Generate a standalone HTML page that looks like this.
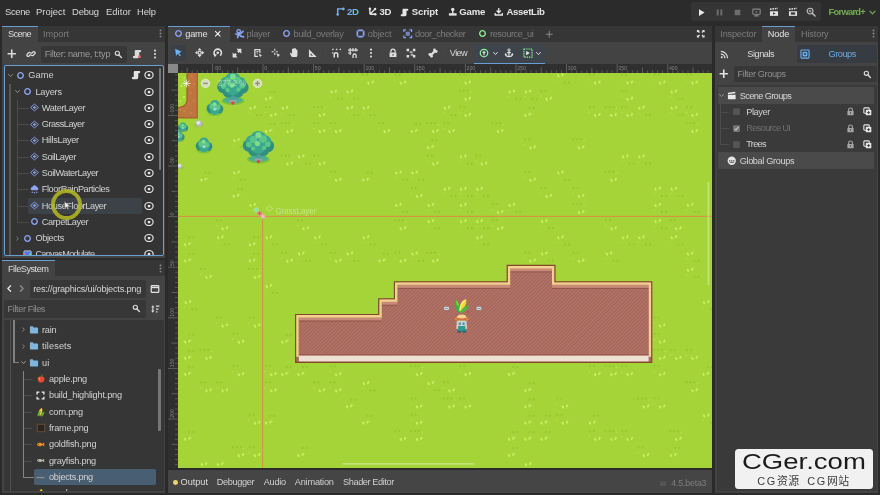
<!DOCTYPE html>
<html>
<head>
<meta charset="utf-8">
<title>Godot Editor</title>
<style>
html,body{margin:0;padding:0;background:#272727;}
body{width:880px;height:495px;overflow:hidden;position:relative;font-family:"Liberation Sans","DejaVu Sans",sans-serif;font-size:9px;color:#d4d4d4;}
#app{will-change:transform;position:absolute;left:0;top:0;width:880px;height:495px;background:#2a2a2a;overflow:hidden;}
.abs{position:absolute;}
.t{position:absolute;white-space:nowrap;line-height:12px;height:12px;font-size:9.2px;color:#d4d4d4;}
svg{position:absolute;overflow:visible;color:#dcdcdc;}
</style>
</head>
<body>
<div id="app">
<!-- menu bar -->
<div class="abs" style="left:0px;top:0px;width:880px;height:25px;background:#2b2b2b;"></div>
<span class="t" style="left:5px;top:6px;font-size:9.4px;color:#d8d8d8;letter-spacing:-0.330px;">Scene</span>
<span class="t" style="left:36px;top:6px;font-size:9.4px;color:#d8d8d8;letter-spacing:0.035px;">Project</span>
<span class="t" style="left:72px;top:6px;font-size:9.4px;color:#d8d8d8;letter-spacing:-0.140px;">Debug</span>
<span class="t" style="left:106px;top:6px;font-size:9.4px;color:#d8d8d8;letter-spacing:0.074px;">Editor</span>
<span class="t" style="left:137px;top:6px;font-size:9.4px;color:#d8d8d8;letter-spacing:-0.083px;">Help</span>
<svg style="left:335.5px;top:7.300000000000001px;color:#74b3f0;" width="9" height="9" viewBox="0 0 16 16"><path d="M3 13.2 V3.4 H13.4" fill="none" stroke="currentColor" stroke-width="2.5"/><circle cx="3" cy="13.2" r="2.3" fill="currentColor"/><circle cx="13.2" cy="3.4" r="2.3" fill="currentColor"/></svg>
<span class="t" style="left:347px;top:6px;font-size:9.6px;color:#74b3f0;font-weight:bold;letter-spacing:-0.386px;">2D</span>
<svg style="left:368.0px;top:7.1px;color:#e6e6e6;" width="9" height="9" viewBox="0 0 16 16"><path d="M3.4 12.8 V3.4 M3.4 12.8 H13 M3.4 12.8 L12.4 3.8" fill="none" stroke="currentColor" stroke-width="2.4"/><circle cx="3.4" cy="3.2" r="2.2" fill="currentColor"/><circle cx="13" cy="12.8" r="2.2" fill="currentColor"/><circle cx="12.6" cy="3.6" r="2.2" fill="currentColor"/></svg>
<span class="t" style="left:379.5px;top:6px;font-size:9.6px;color:#e6e6e6;font-weight:bold;letter-spacing:-0.386px;">3D</span>
<svg style="left:400.0px;top:7.5px;color:#e6e6e6;" width="9" height="9" viewBox="0 0 16 16"><path d="M6 1.5 H13 a1.8 1.8 0 0 1 0 3.6 H11.6 V12 a2.6 2.6 0 0 1 -2.6 2.6 H3 a1.8 1.8 0 0 1 0 -3.6 H4.4 V3.1 A1.6 1.6 0 0 1 6 1.5 Z" fill="currentColor"/></svg>
<span class="t" style="left:411.8px;top:6px;font-size:9.6px;color:#e6e6e6;font-weight:bold;letter-spacing:-0.168px;">Script</span>
<svg style="left:447.75px;top:7.25px;color:#e6e6e6;" width="9.5" height="9.5" viewBox="0 0 16 16"><circle cx="8" cy="4" r="2.8" fill="currentColor"/><path d="M6.8 6 H9.2 V11 H6.8 Z" fill="currentColor"/><path d="M1.5 10.5 H14.5 V14.5 H1.5 Z" fill="currentColor"/></svg>
<span class="t" style="left:459.3px;top:6px;font-size:9.6px;color:#e6e6e6;font-weight:bold;letter-spacing:-0.220px;">Game</span>
<svg style="left:494.25px;top:7.25px;color:#e6e6e6;" width="9.5" height="9.5" viewBox="0 0 16 16"><path d="M8 1.5 V9 M4.5 6 L8 9.6 L11.5 6" fill="none" stroke="currentColor" stroke-width="2.2"/><path d="M2 10 V13.5 H14 V10" fill="none" stroke="currentColor" stroke-width="2.2"/></svg>
<span class="t" style="left:506.4px;top:6px;font-size:9.6px;color:#e6e6e6;font-weight:bold;letter-spacing:-0.292px;">AssetLib</span>
<div class="abs" style="left:690.8px;top:2.4px;width:130.4px;height:18.8px;background:#353535;border-radius:3px;"></div>
<svg style="left:696.5px;top:7.5px;color:#e8e8e8;" width="9" height="9" viewBox="0 0 16 16"><path d="M3.5 2 L13.5 8 L3.5 14 Z" fill="currentColor"/></svg>
<svg style="left:714.5px;top:7.5px;color:#6d6d6d;" width="9" height="9" viewBox="0 0 16 16"><path d="M3 2.5 H6.5 V13.5 H3 Z M9.5 2.5 H13 V13.5 H9.5 Z" fill="currentColor"/></svg>
<svg style="left:733.0px;top:7.5px;color:#6d6d6d;" width="9" height="9" viewBox="0 0 16 16"><rect x="3" y="3" width="10" height="10" rx="1" fill="currentColor"/></svg>
<svg style="left:751.5px;top:7.5px;color:#858585;" width="9" height="9" viewBox="0 0 16 16"><rect x="1.5" y="2" width="13" height="9" rx="1" fill="none" stroke="currentColor" stroke-width="2"/><path d="M6.5 5 L10 6.8 L6.5 8.6 Z" fill="currentColor"/><path d="M4 14 H12 M8 11 V14" stroke="currentColor" stroke-width="2"/></svg>
<svg style="left:769.0px;top:7.0px;color:#e2e2e2;" width="10" height="10" viewBox="0 0 16 16"><path d="M1.5 6.8 H14.5 V14.2 H1.5 Z" fill="currentColor"/><path d="M1.5 3.6 L14.2 2.2" stroke="currentColor" stroke-width="2.6" stroke-dasharray="2.6 1.4"/><path d="M6.5 8.4 L10.5 10.4 L6.5 12.4 Z" fill="#353535"/></svg>
<svg style="left:787.5px;top:7.0px;color:#e2e2e2;" width="10" height="10" viewBox="0 0 16 16"><path d="M1.5 6.8 H14.5 V14.2 H1.5 Z" fill="currentColor"/><path d="M1.5 3.6 L14.2 2.2" stroke="currentColor" stroke-width="2.6" stroke-dasharray="2.6 1.4"/><rect x="4.5" y="8.6" width="7" height="3.6" fill="#353535"/></svg>
<svg style="left:806.0px;top:7.0px;color:#bdbdbd;" width="10" height="10" viewBox="0 0 16 16"><circle cx="6.5" cy="6.5" r="4.6" fill="none" stroke="currentColor" stroke-width="1.8"/><path d="M10 10 L14.5 14.5" stroke="currentColor" stroke-width="2.4" stroke-linecap="round"/><path d="M4.5 6.5 H8.5 M6.5 4.5 V8.5" stroke="currentColor" stroke-width="1.4"/></svg>
<span class="t" style="left:828.6px;top:6px;font-size:9.4px;color:#73aa53;font-weight:bold;letter-spacing:-0.746px;">Forward+</span>
<svg style="left:867.9px;top:7.699999999999999px;color:#73aa53;" width="9" height="9" viewBox="0 0 16 16"><path d="M3.5 5.5 L8 10.5 L12.5 5.5" fill="none" stroke="currentColor" stroke-width="2.2" stroke-linecap="round" stroke-linejoin="round"/></svg>
<!-- scene dock -->
<div class="abs" style="left:2px;top:26px;width:163px;height:16px;background:#363636;"></div>
<div class="abs" style="left:2px;top:26px;width:36px;height:16px;background:#434343;border-top:1px solid #6a9fd3;box-sizing:border-box;"></div>
<span class="t" style="left:8px;top:27.799999999999997px;font-size:9.2px;color:#dedede;letter-spacing:-0.617px;">Scene</span>
<span class="t" style="left:43px;top:27.799999999999997px;font-size:9.2px;color:#7c7c7c;letter-spacing:-0.012px;">Import</span>
<svg style="left:155.5px;top:29.299999999999997px;color:#8a8a8a;" width="9" height="9" viewBox="0 0 16 16"><circle cx="8" cy="2.5" r="1.7" fill="currentColor"/><circle cx="8" cy="8" r="1.7" fill="currentColor"/><circle cx="8" cy="13.5" r="1.7" fill="currentColor"/></svg>
<div class="abs" style="left:2px;top:42px;width:163px;height:216px;background:#434343;"></div>
<svg style="left:7.25px;top:49.25px;color:#dadada;" width="9.5" height="9.5" viewBox="0 0 16 16"><path d="M8 1 V15 M1 8 H15" stroke="currentColor" stroke-width="2.7" fill="none"/></svg>
<svg style="left:25.5px;top:49.0px;color:#dadada;" width="10" height="10" viewBox="0 0 16 16"><g fill="none" stroke="currentColor" stroke-width="2.2" stroke-linecap="round"><path d="M6.8 9.2 L4.9 11.1 a2 2 0 0 1 -2.9 -2.9 L4.2 6 a2 2 0 0 1 3 0"/><path d="M9.2 6.8 L11.1 4.9 a2 2 0 0 1 2.9 2.9 L11.8 10 a2 2 0 0 1 -3 0"/></g></svg>
<div class="abs" style="left:41px;top:45.5px;width:85.5px;height:17px;background:#373737;border-radius:2px;"></div>
<span class="t" style="left:44.8px;top:48px;font-size:9.2px;color:#9b9b9b;letter-spacing:-0.293px;">Filter: name, t:typ</span>
<svg style="left:114.25px;top:49.75px;color:#dadada;" width="8.5" height="8.5" viewBox="0 0 16 16"><circle cx="6.3" cy="6.3" r="3.9" fill="none" stroke="currentColor" stroke-width="2.2"/><path d="M9.3 9.3 L14 14" stroke="currentColor" stroke-width="2.6" stroke-linecap="round"/></svg>
<svg style="left:131.5px;top:49.0px;color:#dadada;" width="10" height="10" viewBox="0 0 16 16"><path d="M6 1.5 H13 a1.8 1.8 0 0 1 0 3.6 H11.6 V12 a2.6 2.6 0 0 1 -2.6 2.6 H3 a1.8 1.8 0 0 1 0 -3.6 H4.4 V3.1 A1.6 1.6 0 0 1 6 1.5 Z" fill="currentColor"/></svg>
<div class="abs" style="left:137.8px;top:55px;width:3px;height:3px;border-radius:2px;background:#ee5f66;"></div>
<svg style="left:150.0px;top:49.0px;color:#dadada;" width="10" height="10" viewBox="0 0 16 16"><circle cx="8" cy="2.5" r="1.7" fill="currentColor"/><circle cx="8" cy="8" r="1.7" fill="currentColor"/><circle cx="8" cy="13.5" r="1.7" fill="currentColor"/></svg>
<div class="abs" style="left:4px;top:65px;width:160px;height:191px;background:#343434;border:1px solid #6a9fd3;box-sizing:border-box;border-radius:2px;"></div>
<div class="abs" style="left:5px;top:66px;width:158px;height:189px;overflow:hidden;">
<div class="abs" style="left:4px;top:18px;width:2px;height:175px;background:#575757;"></div>
<div class="abs" style="left:11.5px;top:34px;width:1px;height:122px;background:#4a4a4a;"></div>
<div class="abs" style="left:12px;top:41.86px;width:12px;height:1px;background:#4a4a4a;"></div>
<div class="abs" style="left:12px;top:58.14px;width:12px;height:1px;background:#4a4a4a;"></div>
<div class="abs" style="left:12px;top:74.42000000000002px;width:12px;height:1px;background:#4a4a4a;"></div>
<div class="abs" style="left:12px;top:90.69999999999999px;width:12px;height:1px;background:#4a4a4a;"></div>
<div class="abs" style="left:12px;top:106.98000000000002px;width:12px;height:1px;background:#4a4a4a;"></div>
<div class="abs" style="left:12px;top:123.25999999999999px;width:12px;height:1px;background:#4a4a4a;"></div>
<div class="abs" style="left:12px;top:139.54000000000002px;width:12px;height:1px;background:#4a4a4a;"></div>
<div class="abs" style="left:12px;top:155.82px;width:12px;height:1px;background:#4a4a4a;"></div>
<div class="abs" style="left:22.5px;top:131.8px;width:114.5px;height:16px;background:#3c4248;border-radius:2px;"></div>
<svg style="left:1.5px;top:5.799999999999997px;color:#8c8c8c;" width="7" height="7" viewBox="0 0 16 16"><path d="M3.5 5.5 L8 10.5 L12.5 5.5" fill="none" stroke="currentColor" stroke-width="2.2" stroke-linecap="round" stroke-linejoin="round"/></svg>
<svg style="left:10.5px;top:4.799999999999997px;" width="9" height="9" viewBox="0 0 16 16"><circle cx="8" cy="8" r="5" fill="none" stroke="#8da5f3" stroke-width="2.4"/></svg>
<span class="t" style="left:23.3px;top:3.299999999999997px;font-size:9.2px;color:#d2d2d2;letter-spacing:0.112px;">Game</span>
<svg style="left:139.0px;top:4.299999999999997px;color:#e4e4e4;" width="10" height="10" viewBox="0 0 16 16"><ellipse cx="8" cy="8" rx="6.6" ry="5.6" fill="none" stroke="currentColor" stroke-width="1.9"/><circle cx="8" cy="8" r="2.2" fill="currentColor"/></svg>
<svg style="left:8.5px;top:22.08px;color:#8c8c8c;" width="7" height="7" viewBox="0 0 16 16"><path d="M3.5 5.5 L8 10.5 L12.5 5.5" fill="none" stroke="currentColor" stroke-width="2.2" stroke-linecap="round" stroke-linejoin="round"/></svg>
<svg style="left:17.5px;top:21.08px;" width="9" height="9" viewBox="0 0 16 16"><circle cx="8" cy="8" r="5" fill="none" stroke="#8da5f3" stroke-width="2.4"/></svg>
<span class="t" style="left:30.4px;top:19.58px;font-size:9.2px;color:#d2d2d2;letter-spacing:-0.185px;">Layers</span>
<svg style="left:139.0px;top:20.58px;color:#e4e4e4;" width="10" height="10" viewBox="0 0 16 16"><ellipse cx="8" cy="8" rx="6.6" ry="5.6" fill="none" stroke="currentColor" stroke-width="1.9"/><circle cx="8" cy="8" r="2.2" fill="currentColor"/></svg>
<svg style="left:24.799999999999997px;top:37.36px;" width="9" height="9" viewBox="0 0 16 16"><path d="M8 2 L15 8 L8 14 L1 8 Z" fill="none" stroke="#8da5f3" stroke-width="1.6"/><path d="M8 5.2 L11.2 8 L8 10.8 L4.8 8 Z" fill="#8da5f3"/></svg>
<span class="t" style="left:36.8px;top:35.86px;font-size:9.2px;color:#d2d2d2;letter-spacing:-0.371px;">WaterLayer</span>
<svg style="left:139.0px;top:36.86px;color:#e4e4e4;" width="10" height="10" viewBox="0 0 16 16"><ellipse cx="8" cy="8" rx="6.6" ry="5.6" fill="none" stroke="currentColor" stroke-width="1.9"/><circle cx="8" cy="8" r="2.2" fill="currentColor"/></svg>
<svg style="left:24.799999999999997px;top:53.64px;" width="9" height="9" viewBox="0 0 16 16"><path d="M8 2 L15 8 L8 14 L1 8 Z" fill="none" stroke="#8da5f3" stroke-width="1.6"/><path d="M8 5.2 L11.2 8 L8 10.8 L4.8 8 Z" fill="#8da5f3"/></svg>
<span class="t" style="left:36.8px;top:52.14px;font-size:9.2px;color:#d2d2d2;letter-spacing:-0.505px;">GrassLayer</span>
<svg style="left:139.0px;top:53.14px;color:#e4e4e4;" width="10" height="10" viewBox="0 0 16 16"><ellipse cx="8" cy="8" rx="6.6" ry="5.6" fill="none" stroke="currentColor" stroke-width="1.9"/><circle cx="8" cy="8" r="2.2" fill="currentColor"/></svg>
<svg style="left:24.799999999999997px;top:69.92000000000002px;" width="9" height="9" viewBox="0 0 16 16"><path d="M8 2 L15 8 L8 14 L1 8 Z" fill="none" stroke="#8da5f3" stroke-width="1.6"/><path d="M8 5.2 L11.2 8 L8 10.8 L4.8 8 Z" fill="#8da5f3"/></svg>
<span class="t" style="left:36.8px;top:68.42000000000002px;font-size:9.2px;color:#d2d2d2;letter-spacing:-0.339px;">HillsLayer</span>
<svg style="left:139.0px;top:69.42000000000002px;color:#e4e4e4;" width="10" height="10" viewBox="0 0 16 16"><ellipse cx="8" cy="8" rx="6.6" ry="5.6" fill="none" stroke="currentColor" stroke-width="1.9"/><circle cx="8" cy="8" r="2.2" fill="currentColor"/></svg>
<svg style="left:24.799999999999997px;top:86.19999999999999px;" width="9" height="9" viewBox="0 0 16 16"><path d="M8 2 L15 8 L8 14 L1 8 Z" fill="none" stroke="#8da5f3" stroke-width="1.6"/><path d="M8 5.2 L11.2 8 L8 10.8 L4.8 8 Z" fill="#8da5f3"/></svg>
<span class="t" style="left:36.8px;top:84.69999999999999px;font-size:9.2px;color:#d2d2d2;letter-spacing:-0.484px;">SoilLayer</span>
<svg style="left:139.0px;top:85.69999999999999px;color:#e4e4e4;" width="10" height="10" viewBox="0 0 16 16"><ellipse cx="8" cy="8" rx="6.6" ry="5.6" fill="none" stroke="currentColor" stroke-width="1.9"/><circle cx="8" cy="8" r="2.2" fill="currentColor"/></svg>
<svg style="left:24.799999999999997px;top:102.48000000000002px;" width="9" height="9" viewBox="0 0 16 16"><path d="M8 2 L15 8 L8 14 L1 8 Z" fill="none" stroke="#8da5f3" stroke-width="1.6"/><path d="M8 5.2 L11.2 8 L8 10.8 L4.8 8 Z" fill="#8da5f3"/></svg>
<span class="t" style="left:36.8px;top:100.98000000000002px;font-size:9.2px;color:#d2d2d2;letter-spacing:-0.432px;">SoilWaterLayer</span>
<svg style="left:139.0px;top:101.98000000000002px;color:#e4e4e4;" width="10" height="10" viewBox="0 0 16 16"><ellipse cx="8" cy="8" rx="6.6" ry="5.6" fill="none" stroke="currentColor" stroke-width="1.9"/><circle cx="8" cy="8" r="2.2" fill="currentColor"/></svg>
<svg style="left:24.799999999999997px;top:118.75999999999999px;" width="9" height="9" viewBox="0 0 16 16"><path d="M3.5 9.5 a3 3 0 0 1 .6-5.9 a4.2 4.2 0 0 1 8-.2 a3.1 3.1 0 0 1 .4 6.1 Z" fill="#8da5f3"/><circle cx="4" cy="13" r="1.3" fill="#8da5f3"/><circle cx="8" cy="13.6" r="1.3" fill="#8da5f3"/><circle cx="12" cy="13" r="1.3" fill="#8da5f3"/></svg>
<span class="t" style="left:36.8px;top:117.25999999999999px;font-size:9.2px;color:#d2d2d2;letter-spacing:-0.414px;">FloorRainParticles</span>
<svg style="left:139.0px;top:118.25999999999999px;color:#e4e4e4;" width="10" height="10" viewBox="0 0 16 16"><ellipse cx="8" cy="8" rx="6.6" ry="5.6" fill="none" stroke="currentColor" stroke-width="1.9"/><circle cx="8" cy="8" r="2.2" fill="currentColor"/></svg>
<svg style="left:24.799999999999997px;top:135.04000000000002px;" width="9" height="9" viewBox="0 0 16 16"><path d="M8 2 L15 8 L8 14 L1 8 Z" fill="none" stroke="#8da5f3" stroke-width="1.6"/><path d="M8 5.2 L11.2 8 L8 10.8 L4.8 8 Z" fill="#8da5f3"/></svg>
<span class="t" style="left:36.8px;top:133.54000000000002px;font-size:9.2px;color:#d2d2d2;letter-spacing:-0.404px;">HouseFloorLayer</span>
<svg style="left:139.0px;top:134.54000000000002px;color:#e4e4e4;" width="10" height="10" viewBox="0 0 16 16"><ellipse cx="8" cy="8" rx="6.6" ry="5.6" fill="none" stroke="currentColor" stroke-width="1.9"/><circle cx="8" cy="8" r="2.2" fill="currentColor"/></svg>
<svg style="left:24.799999999999997px;top:151.32px;" width="9" height="9" viewBox="0 0 16 16"><circle cx="8" cy="8" r="5" fill="none" stroke="#8da5f3" stroke-width="2.4"/></svg>
<span class="t" style="left:36.8px;top:149.82px;font-size:9.2px;color:#d2d2d2;letter-spacing:-0.375px;">CarpetLayer</span>
<svg style="left:139.0px;top:150.82px;color:#e4e4e4;" width="10" height="10" viewBox="0 0 16 16"><ellipse cx="8" cy="8" rx="6.6" ry="5.6" fill="none" stroke="currentColor" stroke-width="1.9"/><circle cx="8" cy="8" r="2.2" fill="currentColor"/></svg>
<svg style="left:8.5px;top:168.60000000000002px;color:#8c8c8c;" width="7" height="7" viewBox="0 0 16 16"><path d="M6 4 L10 8 L6 12" fill="none" stroke="currentColor" stroke-width="1.8" stroke-linecap="round" stroke-linejoin="round"/></svg>
<svg style="left:17.5px;top:167.60000000000002px;" width="9" height="9" viewBox="0 0 16 16"><circle cx="8" cy="8" r="5" fill="none" stroke="#8da5f3" stroke-width="2.4"/></svg>
<span class="t" style="left:30.4px;top:166.10000000000002px;font-size:9.2px;color:#d2d2d2;letter-spacing:-0.384px;">Objects</span>
<svg style="left:139.0px;top:167.10000000000002px;color:#e4e4e4;" width="10" height="10" viewBox="0 0 16 16"><ellipse cx="8" cy="8" rx="6.6" ry="5.6" fill="none" stroke="currentColor" stroke-width="1.9"/><circle cx="8" cy="8" r="2.2" fill="currentColor"/></svg>
<svg style="left:17.5px;top:183.88px;" width="9" height="9" viewBox="0 0 16 16"><rect x="1.5" y="1.5" width="13" height="13" rx="1.5" fill="#4f7df0"/><path d="M1.5 14.5 L1.5 5 L11 14.5 Z" fill="#ef5d5d"/><path d="M4 14.5 L14.5 4 L14.5 14.5 Z" fill="#5fe36a" opacity=".85"/><rect x="1.5" y="1.5" width="13" height="13" rx="1.5" fill="none" stroke="#c9c9c9" stroke-width="1.4"/></svg>
<span class="t" style="left:30.4px;top:182.38px;font-size:9.2px;color:#d2d2d2;letter-spacing:-0.717px;">CanvasModulate</span>
<svg style="left:139.0px;top:183.38px;color:#e4e4e4;" width="10" height="10" viewBox="0 0 16 16"><ellipse cx="8" cy="8" rx="6.6" ry="5.6" fill="none" stroke="currentColor" stroke-width="1.9"/><circle cx="8" cy="8" r="2.2" fill="currentColor"/></svg>
<svg style="left:125.5px;top:4.299999999999997px;color:#e4e4e4;" width="10" height="10" viewBox="0 0 16 16"><path d="M6 1.5 H13 a1.8 1.8 0 0 1 0 3.6 H11.6 V12 a2.6 2.6 0 0 1 -2.6 2.6 H3 a1.8 1.8 0 0 1 0 -3.6 H4.4 V3.1 A1.6 1.6 0 0 1 6 1.5 Z" fill="currentColor"/></svg>
<div class="abs" style="left:153.6px;top:1.5px;width:2.5px;height:102px;background:#767676;border-radius:1px;"></div>
</div>
<div class="abs" style="left:51.2px;top:189.2px;width:31px;height:31px;border-radius:50%;border:4.4px solid rgba(176,182,38,0.88);box-sizing:border-box;"></div>
<svg style="left:63.5px;top:201px;" width="7" height="9" viewBox="0 0 7 9"><path d="M.5 .5 L6 5.2 L3.6 5.4 L4.8 8 L3.8 8.5 L2.6 5.9 L.8 7.4 Z" fill="#f2f2f2" stroke="#555" stroke-width=".5"/></svg>
<!-- filesystem dock -->
<div class="abs" style="left:2px;top:260px;width:163px;height:16px;background:#363636;"></div>
<div class="abs" style="left:2px;top:260px;width:52.5px;height:16px;background:#434343;border-top:1px solid #6a9fd3;box-sizing:border-box;"></div>
<span class="t" style="left:8px;top:262.5px;font-size:9.2px;color:#dedede;letter-spacing:-0.500px;">FileSystem</span>
<svg style="left:155.5px;top:264.0px;color:#8a8a8a;" width="9" height="9" viewBox="0 0 16 16"><circle cx="8" cy="2.5" r="1.7" fill="currentColor"/><circle cx="8" cy="8" r="1.7" fill="currentColor"/><circle cx="8" cy="13.5" r="1.7" fill="currentColor"/></svg>
<div class="abs" style="left:2px;top:276px;width:163px;height:217px;background:#434343;"></div>
<svg style="left:5.0px;top:284.0px;color:#e6e6e6;" width="9" height="9" viewBox="0 0 16 16"><path d="M10 3 L5 8 L10 13" fill="none" stroke="currentColor" stroke-width="2.2" stroke-linecap="round" stroke-linejoin="round"/></svg>
<svg style="left:17.0px;top:284.0px;color:#8d8d8d;" width="9" height="9" viewBox="0 0 16 16"><path d="M6 3 L11 8 L6 13" fill="none" stroke="currentColor" stroke-width="2.2" stroke-linecap="round" stroke-linejoin="round"/></svg>
<div class="abs" style="left:30px;top:280px;width:115.5px;height:17.5px;background:#373737;border-radius:2px;"></div>
<span class="t" style="left:33.2px;top:282.6px;font-size:9.2px;color:#d6d6d6;letter-spacing:-0.226px;">res://graphics/ui/objects.png</span>
<svg style="left:150.0px;top:283.5px;color:#e2e2e2;" width="10" height="10" viewBox="0 0 16 16"><rect x="2" y="2.5" width="12" height="11" rx="1.2" fill="none" stroke="currentColor" stroke-width="2"/><path d="M2 5.5 H14" stroke="currentColor" stroke-width="2.4"/></svg>
<div class="abs" style="left:4px;top:300px;width:141.5px;height:17.5px;background:#373737;border-radius:2px;"></div>
<span class="t" style="left:7.6px;top:302.6px;font-size:9.2px;color:#8f8f8f;letter-spacing:-0.410px;">Filter Files</span>
<svg style="left:132.25px;top:304.25px;color:#dadada;" width="8.5" height="8.5" viewBox="0 0 16 16"><circle cx="6.3" cy="6.3" r="3.9" fill="none" stroke="currentColor" stroke-width="2.2"/><path d="M9.3 9.3 L14 14" stroke="currentColor" stroke-width="2.6" stroke-linecap="round"/></svg>
<svg style="left:150.0px;top:303.5px;color:#dadada;" width="10" height="10" viewBox="0 0 16 16"><path d="M4.5 2 L1.8 5.5 H7.2 Z M4.5 14 L1.8 10.5 H7.2 Z" fill="currentColor"/><path d="M4.5 5 V11" stroke="currentColor" stroke-width="1.8"/><path d="M9.5 3.5 H15 M9.5 8 H13.5 M9.5 12.5 H12" stroke="currentColor" stroke-width="2"/></svg>
<div class="abs" style="left:4px;top:319.5px;width:159.5px;height:171.5px;background:#363636;border-radius:2px;"></div>
<div class="abs" style="left:4px;top:320px;width:159px;height:171px;overflow:hidden;">
<div class="abs" style="left:5.5px;top:0px;width:1px;height:175px;background:#505050;"></div>
<div class="abs" style="left:9.4px;top:0px;width:1.4px;height:43.2px;background:#808080;"></div>
<div class="abs" style="left:9.4px;top:41.89999999999998px;width:6px;height:1.3px;background:#808080;"></div>
<div class="abs" style="left:18.6px;top:51px;width:1.7px;height:107.3px;background:#858585;"></div>
<div class="abs" style="left:18.6px;top:156.60000000000002px;width:11px;height:1.7px;background:#858585;"></div>
<div class="abs" style="left:29.5px;top:148.8px;width:122.5px;height:15.8px;background:#485e72;border-radius:2px;"></div>
<svg style="left:15.8px;top:6.300000000000011px;color:#9a9a9a;" width="7" height="7" viewBox="0 0 16 16"><path d="M6 4 L10 8 L6 12" fill="none" stroke="currentColor" stroke-width="1.8" stroke-linecap="round" stroke-linejoin="round"/></svg>
<svg style="left:24.700000000000003px;top:4.800000000000011px;" width="10" height="10" viewBox="0 0 16 16"><path d="M1.5 3 a1 1 0 0 1 1 -1 H6 l1.5 1.8 H13.5 a1 1 0 0 1 1 1 V12.5 a1 1 0 0 1 -1 1 H2.5 a1 1 0 0 1 -1 -1 Z" fill="#7db5dd"/></svg>
<span class="t" style="left:38px;top:3.8000000000000114px;font-size:9.2px;color:#d2d2d2;letter-spacing:-0.210px;">rain</span>
<svg style="left:15.8px;top:22.660000000000025px;color:#9a9a9a;" width="7" height="7" viewBox="0 0 16 16"><path d="M6 4 L10 8 L6 12" fill="none" stroke="currentColor" stroke-width="1.8" stroke-linecap="round" stroke-linejoin="round"/></svg>
<svg style="left:24.700000000000003px;top:21.160000000000025px;" width="10" height="10" viewBox="0 0 16 16"><path d="M1.5 3 a1 1 0 0 1 1 -1 H6 l1.5 1.8 H13.5 a1 1 0 0 1 1 1 V12.5 a1 1 0 0 1 -1 1 H2.5 a1 1 0 0 1 -1 -1 Z" fill="#7db5dd"/></svg>
<span class="t" style="left:38px;top:20.160000000000025px;font-size:9.2px;color:#d2d2d2;letter-spacing:0.108px;">tilesets</span>
<svg style="left:15.8px;top:39.01999999999998px;color:#9a9a9a;" width="7" height="7" viewBox="0 0 16 16"><path d="M3.5 5.5 L8 10.5 L12.5 5.5" fill="none" stroke="currentColor" stroke-width="2.2" stroke-linecap="round" stroke-linejoin="round"/></svg>
<svg style="left:24.700000000000003px;top:37.51999999999998px;" width="10" height="10" viewBox="0 0 16 16"><path d="M1.5 3 a1 1 0 0 1 1 -1 H6 l1.5 1.8 H13.5 a1 1 0 0 1 1 1 V12.5 a1 1 0 0 1 -1 1 H2.5 a1 1 0 0 1 -1 -1 Z" fill="#7db5dd"/></svg>
<span class="t" style="left:38px;top:36.51999999999998px;font-size:9.2px;color:#d2d2d2;letter-spacing:0.170px;">ui</span>
<div class="abs" style="left:20.3px;top:58.879999999999995px;width:8px;height:1px;background:#4c4c4c;"></div>
<svg style="left:31.700000000000003px;top:53.879999999999995px;" width="10" height="10" viewBox="0 0 16 16"><path d="M8 4.6 C6.5 3.4 2.5 3.6 2.5 8 C2.5 11.5 5 14.5 8 13.6 C11 14.5 13.5 11.5 13.5 8 C13.5 3.6 9.5 3.4 8 4.6 Z" fill="#e8492f"/><path d="M8 4.8 C8 3 9 1.6 10.6 1.2" stroke="#5d8f2b" stroke-width="1.6" fill="none"/><circle cx="5.6" cy="7.4" r="1.2" fill="#f6a58f"/></svg>
<span class="t" style="left:45px;top:52.879999999999995px;font-size:9.2px;color:#d2d2d2;letter-spacing:-0.268px;">apple.png</span>
<div class="abs" style="left:20.3px;top:75.24000000000001px;width:8px;height:1px;background:#4c4c4c;"></div>
<svg style="left:32.2px;top:70.74000000000001px;" width="9" height="9" viewBox="0 0 16 16"><path d="M2 6 V2 H6 M10 2 H14 V6 M14 10 V14 H10 M6 14 H2 V10" fill="none" stroke="#ececec" stroke-width="2.4"/></svg>
<span class="t" style="left:45px;top:69.24000000000001px;font-size:9.2px;color:#d2d2d2;letter-spacing:-0.196px;">build_highlight.png</span>
<div class="abs" style="left:20.3px;top:91.60000000000002px;width:8px;height:1px;background:#4c4c4c;"></div>
<svg style="left:31.700000000000003px;top:86.60000000000002px;" width="10" height="10" viewBox="0 0 16 16"><path d="M5 13 C3 9 5 3 9.5 1.5 C11 5 10 11 7 14 Z" fill="#f2d23a"/><path d="M2.5 14.5 C2 10 4 7 7.5 6 C8 9 6.5 13 3.5 15 Z" fill="#5fae35"/><path d="M8 15 C8 11 10.5 8 13.5 7.5 C13.5 11 11.5 14 8.5 15.5 Z" fill="#5fae35"/></svg>
<span class="t" style="left:45px;top:85.60000000000002px;font-size:9.2px;color:#d2d2d2;letter-spacing:-0.250px;">corn.png</span>
<div class="abs" style="left:20.3px;top:107.96000000000004px;width:8px;height:1px;background:#4c4c4c;"></div>
<svg style="left:31.700000000000003px;top:102.96000000000004px;" width="10" height="10" viewBox="0 0 16 16"><rect x="2" y="2" width="12" height="12" fill="#2b2522" stroke="#6b5138" stroke-width="1.4"/></svg>
<span class="t" style="left:45px;top:101.96000000000004px;font-size:9.2px;color:#d2d2d2;letter-spacing:-0.213px;">frame.png</span>
<div class="abs" style="left:20.3px;top:124.32px;width:8px;height:1px;background:#4c4c4c;"></div>
<svg style="left:32.2px;top:119.82px;" width="9" height="9" viewBox="0 0 16 16"><path d="M1.5 8 C3 4.5 9 4 11 7.2 L14.5 4.5 V11.5 L11 8.8 C9 12 3 11.5 1.5 8 Z" fill="#f0922b"/><circle cx="4.5" cy="7.4" r=".9" fill="#442"/></svg>
<span class="t" style="left:45px;top:118.32px;font-size:9.2px;color:#d2d2d2;letter-spacing:-0.176px;">goldfish.png</span>
<div class="abs" style="left:20.3px;top:140.68px;width:8px;height:1px;background:#4c4c4c;"></div>
<svg style="left:32.2px;top:136.18px;" width="9" height="9" viewBox="0 0 16 16"><path d="M1.5 8 C3 5 9 4.6 11 7.3 L14.5 5 V11 L11 8.7 C9 11.4 3 11 1.5 8 Z" fill="#b9b9a8"/><circle cx="4.5" cy="7.5" r=".9" fill="#443"/></svg>
<span class="t" style="left:45px;top:134.68px;font-size:9.2px;color:#d2d2d2;letter-spacing:-0.260px;">grayfish.png</span>
<svg style="left:32.2px;top:152.54000000000002px;" width="9" height="9" viewBox="0 0 16 16"><rect x="1" y="7" width="14" height="2.2" fill="#8a8f96"/></svg>
<span class="t" style="left:45px;top:151.04000000000002px;font-size:9.2px;color:#d2d2d2;letter-spacing:-0.277px;">objects.png</span>
<div class="abs" style="left:20.3px;top:173.39999999999998px;width:8px;height:1px;background:#4c4c4c;"></div>
<svg style="left:31.700000000000003px;top:168.39999999999998px;" width="10" height="10" viewBox="0 0 16 16"><path d="M5 13 C3 9 5 3 9.5 1.5 C11 5 10 11 7 14 Z" fill="#f2d23a"/><path d="M2.5 14.5 C2 10 4 7 7.5 6 C8 9 6.5 13 3.5 15 Z" fill="#5fae35"/><path d="M8 15 C8 11 10.5 8 13.5 7.5 C13.5 11 11.5 14 8.5 15.5 Z" fill="#5fae35"/></svg>
<span class="t" style="left:45px;top:167.39999999999998px;font-size:9.2px;color:#d2d2d2;letter-spacing:-0.262px;">overlay.png</span>
<div class="abs" style="left:154.2px;top:49px;width:2.5px;height:62px;background:#767676;border-radius:1px;"></div>
</div>
<!-- center -->
<div class="abs" style="left:167.6px;top:26px;width:544.4px;height:16px;background:#363636;"></div>
<div class="abs" style="left:167.6px;top:26px;width:62px;height:16px;background:#434343;border-top:1px solid #6a9fd3;box-sizing:border-box;"></div>
<svg style="left:173.5px;top:29.299999999999997px;" width="9" height="9" viewBox="0 0 16 16"><circle cx="8" cy="8" r="5" fill="none" stroke="#8da5f3" stroke-width="2.4"/></svg>
<span class="t" style="left:185.3px;top:27.799999999999997px;font-size:9.2px;color:#e4e4e4;letter-spacing:-0.253px;">game</span>
<svg style="left:213.75px;top:30.049999999999997px;color:#f0f0f0;" width="7.5" height="7.5" viewBox="0 0 16 16"><path d="M3 3 L13 13 M13 3 L3 13" stroke="currentColor" stroke-width="2.2" stroke-linecap="round"/></svg>
<svg style="left:234.75px;top:29.049999999999997px;" width="9.5" height="9.5" viewBox="0 0 16 16"><circle cx="6.2" cy="3.8" r="2.9" fill="none" stroke="#8da5f3" stroke-width="2.2"/><path d="M6 7 L4.4 14.4 M6 8.4 C8 11.4 10.4 12.8 14.4 13.2 M6.4 8.6 C9.4 8 11.4 6.4 13.4 4 M1.6 8.4 L6.4 9.8" fill="none" stroke="#8da5f3" stroke-width="2.9" stroke-linecap="round"/></svg>
<span class="t" style="left:246.5px;top:27.799999999999997px;font-size:9.2px;color:#7c7c7c;letter-spacing:-0.259px;">player</span>
<svg style="left:282.0px;top:29.299999999999997px;" width="9" height="9" viewBox="0 0 16 16"><circle cx="8" cy="8" r="5" fill="none" stroke="#8da5f3" stroke-width="2.4"/></svg>
<span class="t" style="left:293.5px;top:27.799999999999997px;font-size:9.2px;color:#7c7c7c;letter-spacing:-0.324px;">build_overlay</span>
<svg style="left:355.5px;top:29.299999999999997px;" width="9" height="9" viewBox="0 0 16 16"><rect x="2.4" y="2.4" width="11.2" height="11.2" rx="2.2" fill="none" stroke="#8da5f3" stroke-width="3"/><path d="M1 1 h3 v3 h-3 Z M12 1 h3 v3 h-3 Z M1 12 h3 v3 h-3 Z M12 12 h3 v3 h-3 Z" fill="#363636" opacity=".55"/></svg>
<span class="t" style="left:367.8px;top:27.799999999999997px;font-size:9.2px;color:#7c7c7c;letter-spacing:-0.175px;">object</span>
<svg style="left:402.75px;top:29.049999999999997px;" width="9.5" height="9.5" viewBox="0 0 16 16"><path d="M1.5 5 V1.5 H5 M11 1.5 H14.5 V5 M14.5 11 V14.5 H11 M5 14.5 H1.5 V11" fill="none" stroke="#8da5f3" stroke-width="2"/><rect x="4.5" y="4.5" width="7" height="7" fill="#8da5f3" opacity=".7"/></svg>
<span class="t" style="left:415px;top:27.799999999999997px;font-size:9.2px;color:#7c7c7c;letter-spacing:-0.437px;">door_checker</span>
<svg style="left:478.0px;top:29.299999999999997px;" width="9" height="9" viewBox="0 0 16 16"><circle cx="8" cy="8" r="5" fill="none" stroke="#8eef97" stroke-width="2.4"/></svg>
<span class="t" style="left:490px;top:27.799999999999997px;font-size:9.2px;color:#7c7c7c;letter-spacing:-0.415px;">resource_ui</span>
<svg style="left:545.25px;top:29.549999999999997px;color:#8b8b8b;" width="8.5" height="8.5" viewBox="0 0 16 16"><path d="M8 1.5 V14.5 M1.5 8 H14.5" stroke="currentColor" stroke-width="1.8" fill="none"/></svg>
<svg style="left:695.75px;top:29.049999999999997px;color:#e2e2e2;" width="9.5" height="9.5" viewBox="0 0 16 16"><path d="M1.5 6 V1.5 H6 L4.6 2.9 L6.8 5.1 L5.1 6.8 L2.9 4.6 Z M10 1.5 H14.5 V6 L13.1 4.6 L10.9 6.8 L9.2 5.1 L11.4 2.9 Z M14.5 10 V14.5 H10 L11.4 13.1 L9.2 10.9 L10.9 9.2 L13.1 11.4 Z M6 14.5 H1.5 V10 L2.9 11.4 L5.1 9.2 L6.8 10.9 L4.6 13.1 Z" fill="currentColor"/></svg>
<div class="abs" style="left:167.6px;top:42px;width:544.4px;height:426px;background:#434343;"></div>
<div class="abs" style="left:170.5px;top:44.6px;width:15px;height:16.2px;background:#3a3f45;border-radius:2px;"></div>
<svg style="left:174.0px;top:48.0px;color:#6db2f2;" width="9" height="9" viewBox="0 0 16 16"><path d="M2 1.5 L13.8 6.6 L8.9 8.7 L12.3 13.4 L10.2 14.8 L7 10.1 L3.6 13.8 Z" fill="currentColor"/></svg>
<svg style="left:194.85px;top:47.85px;color:#dedede;" width="9.3" height="9.3" viewBox="0 0 16 16"><path d="M8 0 L4.6 3.9 H11.4 Z M8 16 L4.6 12.1 H11.4 Z M0 8 L3.9 4.6 V11.4 Z M16 8 L12.1 4.6 V11.4 Z" fill="currentColor"/><circle cx="8" cy="8" r="2.8" fill="none" stroke="currentColor" stroke-width="2.2"/></svg>
<svg style="left:212.95px;top:47.75px;color:#dedede;" width="9.5" height="9.5" viewBox="0 0 16 16"><path d="M4 12.8 A6.2 6.2 0 1 1 12 12.8" fill="none" stroke="currentColor" stroke-width="2.7"/><path d="M.6 10.2 L6.8 10.8 L3 15.6 Z" fill="currentColor"/><circle cx="8" cy="8" r="2.2" fill="currentColor"/></svg>
<svg style="left:231.5px;top:47.5px;color:#dedede;" width="10" height="10" viewBox="0 0 16 16"><path d="M7 1 H15 V9 Z M9 15 H1 V7 Z" fill="currentColor"/><path d="M12.5 3.5 L9.4 6.6 M3.5 12.5 L6.6 9.4" stroke="currentColor" stroke-width="3.6"/></svg>
<svg style="left:252.5px;top:47.5px;color:#dedede;" width="10" height="10" viewBox="0 0 16 16"><path d="M2 1.5 H12 V8 H10 V3.5 H4 V12.5 H8 V14.5 H2 Z" fill="currentColor"/><path d="M5.5 5.5 H9 M5.5 8 H8" stroke="currentColor" stroke-width="1.4"/><path d="M9 9 L15 11.6 L12.4 12.4 L11.6 15 Z" fill="currentColor"/></svg>
<svg style="left:271.0px;top:47.5px;color:#dedede;" width="10" height="10" viewBox="0 0 16 16"><path d="M6 1 V4.5 M6 7.5 V11 M1 6 H4.5 M7.5 6 H11" stroke="currentColor" stroke-width="1.8"/><path d="M8.5 8.5 L15 11.2 L12.3 12.3 L11.2 15 Z" fill="currentColor"/></svg>
<svg style="left:289.2px;top:47.0px;color:#dedede;" width="11" height="11" viewBox="0 0 16 16"><path d="M4.2 14.5 C3 13 1.5 10.5 1.3 9.2 C1.2 8.2 2.6 7.8 3.3 8.9 L4.3 10.4 V3.6 a1 1 0 0 1 2 0 V7 V2.3 a1 1 0 0 1 2 0 V7 V2.9 a1 1 0 0 1 2 0 V7.4 V4.6 a1 1 0 0 1 2 0 V10.5 C12.3 12.5 11.8 13.5 11.2 14.5 Z" fill="currentColor"/></svg>
<svg style="left:307.5px;top:47.5px;color:#dedede;" width="10" height="10" viewBox="0 0 16 16"><path d="M1.5 14.5 V2 L14 14.5 Z M4.2 12 V8.2 L8 12 Z" fill="currentColor" fill-rule="evenodd"/></svg>
<svg style="left:330.5px;top:47.5px;color:#dedede;" width="10" height="10" viewBox="0 0 16 16"><path d="M4 15 V10.5 a4 4 0 0 1 8 0 V15 H9.6 V10.5 a1.6 1.6 0 0 0 -3.2 0 V15 Z" fill="currentColor"/><path d="M3 1 V3.6 M1.7 2.3 H4.3 M7.7 2.3 H10.3 M9 1 V3.6 M13.7 2.3 H16 M15 1 V3.6 M3 7 V9 M1.7 8 H3.6" stroke="currentColor" stroke-width="1.3"/></svg>
<svg style="left:348.0px;top:47.5px;color:#dedede;" width="10" height="10" viewBox="0 0 16 16"><path d="M3.5 0 V11 M8 0 V5.5 M12.5 0 V5.5 M0 3.5 H16 M0 8 H5.5 " stroke="currentColor" stroke-width="1.9"/><path d="M7 16 V12 a3.5 3.5 0 0 1 7 0 V16 H11.9 V12 a1.4 1.4 0 0 0 -2.8 0 V16 Z" fill="currentColor"/></svg>
<svg style="left:365.7px;top:47.5px;color:#dedede;" width="10" height="10" viewBox="0 0 16 16"><circle cx="8" cy="2.5" r="1.7" fill="currentColor"/><circle cx="8" cy="8" r="1.7" fill="currentColor"/><circle cx="8" cy="13.5" r="1.7" fill="currentColor"/></svg>
<svg style="left:387.8px;top:47.5px;color:#dedede;" width="10" height="10" viewBox="0 0 16 16"><path d="M4.6 7 V5.2 a3.4 3.4 0 0 1 6.8 0 V7" fill="none" stroke="currentColor" stroke-width="2"/><path d="M2.5 7 H13.5 V14.5 H2.5 Z M7.2 9.5 V12.2 H8.8 V9.5 Z" fill="currentColor" fill-rule="evenodd"/></svg>
<svg style="left:406.0px;top:47.5px;color:#dedede;" width="10" height="10" viewBox="0 0 16 16"><path d="M1 1 H5 V5 H1 Z M11 1 H15 V5 H11 Z M1 11 H5 V15 H1 Z M11 11 H15 V15 H11 Z" fill="currentColor"/><path d="M6 5 H10.5 V8 H6 Z M7.5 9 H12 V12.5 H7.5 Z" fill="currentColor" opacity=".75"/></svg>
<svg style="left:428.0px;top:47.5px;color:#dedede;" width="10" height="10" viewBox="0 0 16 16"><path d="M4.6 11.4 L11.4 4.6" stroke="currentColor" stroke-width="3.4"/><circle cx="3" cy="10.4" r="2.3" fill="currentColor"/><circle cx="5.6" cy="13" r="2.3" fill="currentColor"/><circle cx="10.4" cy="3" r="2.3" fill="currentColor"/><circle cx="13" cy="5.6" r="2.3" fill="currentColor"/></svg>
<div class="abs" style="left:247.3px;top:46px;width:1px;height:13px;background:#464646;"></div>
<div class="abs" style="left:324.5px;top:46px;width:1px;height:13px;background:#464646;"></div>
<div class="abs" style="left:382px;top:46px;width:1px;height:13px;background:#464646;"></div>
<div class="abs" style="left:421.7px;top:46px;width:1px;height:13px;background:#464646;"></div>
<div class="abs" style="left:443px;top:46px;width:1px;height:13px;background:#464646;"></div>
<div class="abs" style="left:470.5px;top:46px;width:1px;height:13px;background:#464646;"></div>
<span class="t" style="left:449.8px;top:46.6px;font-size:9.2px;color:#d8d8d8;letter-spacing:-0.619px;">View</span>
<div class="abs" style="left:474px;top:43.5px;width:71px;height:20px;background:#3d444b;border-bottom:1.5px solid #6a9fd3;box-sizing:border-box;border-radius:2px 2px 0 0;"></div>
<svg style="left:479.0px;top:47.5px;" width="10" height="10" viewBox="0 0 16 16"><circle cx="8" cy="8" r="6" fill="none" stroke="#8eef97" stroke-width="2"/><path d="M8 4.3 L5 8 H7.1 V11.5 H8.9 V8 H11 Z" fill="#e0e0e0"/></svg>
<svg style="left:492.0px;top:49.5px;color:#dedede;" width="7" height="7" viewBox="0 0 16 16"><path d="M3.5 5.5 L8 10.5 L12.5 5.5" fill="none" stroke="currentColor" stroke-width="2.2" stroke-linecap="round" stroke-linejoin="round"/></svg>
<svg style="left:504.0px;top:47.5px;color:#dedede;" width="10" height="10" viewBox="0 0 16 16"><circle cx="8" cy="3.2" r="1.8" fill="none" stroke="currentColor" stroke-width="1.6"/><path d="M8 5 V14 M5 7.5 H11 M2.2 9.5 C2.6 12.5 5 14 8 14 C11 14 13.4 12.5 13.8 9.5" fill="none" stroke="currentColor" stroke-width="1.9"/><path d="M1 11 L2.3 7.8 L4.8 10.3 Z M15 11 L13.7 7.8 L11.2 10.3 Z" fill="currentColor"/></svg>
<svg style="left:522.7px;top:47.5px;" width="10" height="10" viewBox="0 0 16 16"><rect x="1.5" y="1.5" width="13" height="13" fill="none" stroke="#8eef97" stroke-width="1.8" stroke-dasharray="2.2 1.4"/><path d="M6 5 L11 8 L6 11 Z" fill="#e0e0e0"/><path d="M5 5 H6.4 V11 H5 Z" fill="#e0e0e0"/></svg>
<svg style="left:535.2px;top:49.5px;color:#dedede;" width="7" height="7" viewBox="0 0 16 16"><path d="M3.5 5.5 L8 10.5 L12.5 5.5" fill="none" stroke="currentColor" stroke-width="2.2" stroke-linecap="round" stroke-linejoin="round"/></svg>
<div class="abs" style="left:168px;top:64.2px;width:544px;height:8.8px;background:#2f2f2f;"></div>
<div class="abs" style="left:168px;top:64.2px;width:9.7px;height:403.8px;background:#2f2f2f;"></div>
<svg style="left:177.3px;top:64px;" width="534.4" height="8.6" viewBox="177.3 64 534.4 8.6"><path d="M182.20 70.3 V73" stroke="#6a6a6a" stroke-width=".7"/><path d="M187.26 67.5 V73" stroke="#6a6a6a" stroke-width=".8"/><path d="M192.32 70.3 V73" stroke="#6a6a6a" stroke-width=".7"/><path d="M197.39 70.3 V73" stroke="#6a6a6a" stroke-width=".7"/><path d="M202.45 70.3 V73" stroke="#6a6a6a" stroke-width=".7"/><path d="M207.51 70.3 V73" stroke="#6a6a6a" stroke-width=".7"/><path d="M212.57 64 V73" stroke="#6a6a6a" stroke-width=".8"/><text x="213.77" y="69.6" font-size="5.2" fill="#838383" font-family="Liberation Sans, sans-serif">-50</text><path d="M217.64 70.3 V73" stroke="#6a6a6a" stroke-width=".7"/><path d="M222.70 70.3 V73" stroke="#6a6a6a" stroke-width=".7"/><path d="M227.76 70.3 V73" stroke="#6a6a6a" stroke-width=".7"/><path d="M232.82 70.3 V73" stroke="#6a6a6a" stroke-width=".7"/><path d="M237.89 67.5 V73" stroke="#6a6a6a" stroke-width=".8"/><path d="M242.95 70.3 V73" stroke="#6a6a6a" stroke-width=".7"/><path d="M248.01 70.3 V73" stroke="#6a6a6a" stroke-width=".7"/><path d="M253.07 70.3 V73" stroke="#6a6a6a" stroke-width=".7"/><path d="M258.14 70.3 V73" stroke="#6a6a6a" stroke-width=".7"/><path d="M263.20 64 V73" stroke="#6a6a6a" stroke-width=".8"/><text x="264.40" y="69.6" font-size="5.2" fill="#838383" font-family="Liberation Sans, sans-serif">0</text><path d="M268.26 70.3 V73" stroke="#6a6a6a" stroke-width=".7"/><path d="M273.32 70.3 V73" stroke="#6a6a6a" stroke-width=".7"/><path d="M278.39 70.3 V73" stroke="#6a6a6a" stroke-width=".7"/><path d="M283.45 70.3 V73" stroke="#6a6a6a" stroke-width=".7"/><path d="M288.51 67.5 V73" stroke="#6a6a6a" stroke-width=".8"/><path d="M293.57 70.3 V73" stroke="#6a6a6a" stroke-width=".7"/><path d="M298.64 70.3 V73" stroke="#6a6a6a" stroke-width=".7"/><path d="M303.70 70.3 V73" stroke="#6a6a6a" stroke-width=".7"/><path d="M308.76 70.3 V73" stroke="#6a6a6a" stroke-width=".7"/><path d="M313.82 64 V73" stroke="#6a6a6a" stroke-width=".8"/><text x="315.02" y="69.6" font-size="5.2" fill="#838383" font-family="Liberation Sans, sans-serif">50</text><path d="M318.89 70.3 V73" stroke="#6a6a6a" stroke-width=".7"/><path d="M323.95 70.3 V73" stroke="#6a6a6a" stroke-width=".7"/><path d="M329.01 70.3 V73" stroke="#6a6a6a" stroke-width=".7"/><path d="M334.07 70.3 V73" stroke="#6a6a6a" stroke-width=".7"/><path d="M339.14 67.5 V73" stroke="#6a6a6a" stroke-width=".8"/><path d="M344.20 70.3 V73" stroke="#6a6a6a" stroke-width=".7"/><path d="M349.26 70.3 V73" stroke="#6a6a6a" stroke-width=".7"/><path d="M354.32 70.3 V73" stroke="#6a6a6a" stroke-width=".7"/><path d="M359.39 70.3 V73" stroke="#6a6a6a" stroke-width=".7"/><path d="M364.45 64 V73" stroke="#6a6a6a" stroke-width=".8"/><text x="365.65" y="69.6" font-size="5.2" fill="#838383" font-family="Liberation Sans, sans-serif">100</text><path d="M369.51 70.3 V73" stroke="#6a6a6a" stroke-width=".7"/><path d="M374.57 70.3 V73" stroke="#6a6a6a" stroke-width=".7"/><path d="M379.64 70.3 V73" stroke="#6a6a6a" stroke-width=".7"/><path d="M384.70 70.3 V73" stroke="#6a6a6a" stroke-width=".7"/><path d="M389.76 67.5 V73" stroke="#6a6a6a" stroke-width=".8"/><path d="M394.82 70.3 V73" stroke="#6a6a6a" stroke-width=".7"/><path d="M399.89 70.3 V73" stroke="#6a6a6a" stroke-width=".7"/><path d="M404.95 70.3 V73" stroke="#6a6a6a" stroke-width=".7"/><path d="M410.01 70.3 V73" stroke="#6a6a6a" stroke-width=".7"/><path d="M415.07 64 V73" stroke="#6a6a6a" stroke-width=".8"/><text x="416.27" y="69.6" font-size="5.2" fill="#838383" font-family="Liberation Sans, sans-serif">150</text><path d="M420.14 70.3 V73" stroke="#6a6a6a" stroke-width=".7"/><path d="M425.20 70.3 V73" stroke="#6a6a6a" stroke-width=".7"/><path d="M430.26 70.3 V73" stroke="#6a6a6a" stroke-width=".7"/><path d="M435.32 70.3 V73" stroke="#6a6a6a" stroke-width=".7"/><path d="M440.39 67.5 V73" stroke="#6a6a6a" stroke-width=".8"/><path d="M445.45 70.3 V73" stroke="#6a6a6a" stroke-width=".7"/><path d="M450.51 70.3 V73" stroke="#6a6a6a" stroke-width=".7"/><path d="M455.57 70.3 V73" stroke="#6a6a6a" stroke-width=".7"/><path d="M460.64 70.3 V73" stroke="#6a6a6a" stroke-width=".7"/><path d="M465.70 64 V73" stroke="#6a6a6a" stroke-width=".8"/><text x="466.90" y="69.6" font-size="5.2" fill="#838383" font-family="Liberation Sans, sans-serif">200</text><path d="M470.76 70.3 V73" stroke="#6a6a6a" stroke-width=".7"/><path d="M475.82 70.3 V73" stroke="#6a6a6a" stroke-width=".7"/><path d="M480.89 70.3 V73" stroke="#6a6a6a" stroke-width=".7"/><path d="M485.95 70.3 V73" stroke="#6a6a6a" stroke-width=".7"/><path d="M491.01 67.5 V73" stroke="#6a6a6a" stroke-width=".8"/><path d="M496.07 70.3 V73" stroke="#6a6a6a" stroke-width=".7"/><path d="M501.14 70.3 V73" stroke="#6a6a6a" stroke-width=".7"/><path d="M506.20 70.3 V73" stroke="#6a6a6a" stroke-width=".7"/><path d="M511.26 70.3 V73" stroke="#6a6a6a" stroke-width=".7"/><path d="M516.33 64 V73" stroke="#6a6a6a" stroke-width=".8"/><text x="517.53" y="69.6" font-size="5.2" fill="#838383" font-family="Liberation Sans, sans-serif">250</text><path d="M521.39 70.3 V73" stroke="#6a6a6a" stroke-width=".7"/><path d="M526.45 70.3 V73" stroke="#6a6a6a" stroke-width=".7"/><path d="M531.51 70.3 V73" stroke="#6a6a6a" stroke-width=".7"/><path d="M536.58 70.3 V73" stroke="#6a6a6a" stroke-width=".7"/><path d="M541.64 67.5 V73" stroke="#6a6a6a" stroke-width=".8"/><path d="M546.70 70.3 V73" stroke="#6a6a6a" stroke-width=".7"/><path d="M551.76 70.3 V73" stroke="#6a6a6a" stroke-width=".7"/><path d="M556.83 70.3 V73" stroke="#6a6a6a" stroke-width=".7"/><path d="M561.89 70.3 V73" stroke="#6a6a6a" stroke-width=".7"/><path d="M566.95 64 V73" stroke="#6a6a6a" stroke-width=".8"/><text x="568.15" y="69.6" font-size="5.2" fill="#838383" font-family="Liberation Sans, sans-serif">300</text><path d="M572.01 70.3 V73" stroke="#6a6a6a" stroke-width=".7"/><path d="M577.08 70.3 V73" stroke="#6a6a6a" stroke-width=".7"/><path d="M582.14 70.3 V73" stroke="#6a6a6a" stroke-width=".7"/><path d="M587.20 70.3 V73" stroke="#6a6a6a" stroke-width=".7"/><path d="M592.26 67.5 V73" stroke="#6a6a6a" stroke-width=".8"/><path d="M597.33 70.3 V73" stroke="#6a6a6a" stroke-width=".7"/><path d="M602.39 70.3 V73" stroke="#6a6a6a" stroke-width=".7"/><path d="M607.45 70.3 V73" stroke="#6a6a6a" stroke-width=".7"/><path d="M612.51 70.3 V73" stroke="#6a6a6a" stroke-width=".7"/><path d="M617.58 64 V73" stroke="#6a6a6a" stroke-width=".8"/><text x="618.78" y="69.6" font-size="5.2" fill="#838383" font-family="Liberation Sans, sans-serif">350</text><path d="M622.64 70.3 V73" stroke="#6a6a6a" stroke-width=".7"/><path d="M627.70 70.3 V73" stroke="#6a6a6a" stroke-width=".7"/><path d="M632.76 70.3 V73" stroke="#6a6a6a" stroke-width=".7"/><path d="M637.83 70.3 V73" stroke="#6a6a6a" stroke-width=".7"/><path d="M642.89 67.5 V73" stroke="#6a6a6a" stroke-width=".8"/><path d="M647.95 70.3 V73" stroke="#6a6a6a" stroke-width=".7"/><path d="M653.01 70.3 V73" stroke="#6a6a6a" stroke-width=".7"/><path d="M658.08 70.3 V73" stroke="#6a6a6a" stroke-width=".7"/><path d="M663.14 70.3 V73" stroke="#6a6a6a" stroke-width=".7"/><path d="M668.20 64 V73" stroke="#6a6a6a" stroke-width=".8"/><text x="669.40" y="69.6" font-size="5.2" fill="#838383" font-family="Liberation Sans, sans-serif">400</text><path d="M673.26 70.3 V73" stroke="#6a6a6a" stroke-width=".7"/><path d="M678.33 70.3 V73" stroke="#6a6a6a" stroke-width=".7"/><path d="M683.39 70.3 V73" stroke="#6a6a6a" stroke-width=".7"/><path d="M688.45 70.3 V73" stroke="#6a6a6a" stroke-width=".7"/><path d="M693.51 67.5 V73" stroke="#6a6a6a" stroke-width=".8"/><path d="M698.58 70.3 V73" stroke="#6a6a6a" stroke-width=".7"/><path d="M703.64 70.3 V73" stroke="#6a6a6a" stroke-width=".7"/><path d="M708.70 70.3 V73" stroke="#6a6a6a" stroke-width=".7"/></svg>
<svg style="left:168px;top:72.6px;" width="9.3" height="395.2" viewBox="168 72.6 9.3 395.2"><path d="M175 74.45 H177.7" stroke="#6a6a6a" stroke-width=".7"/><path d="M175 79.51 H177.7" stroke="#6a6a6a" stroke-width=".7"/><path d="M175 84.57 H177.7" stroke="#6a6a6a" stroke-width=".7"/><path d="M171.5 89.64 H177.7" stroke="#6a6a6a" stroke-width=".8"/><path d="M175 94.70 H177.7" stroke="#6a6a6a" stroke-width=".7"/><path d="M175 99.76 H177.7" stroke="#6a6a6a" stroke-width=".7"/><path d="M175 104.82 H177.7" stroke="#6a6a6a" stroke-width=".7"/><path d="M175 109.89 H177.7" stroke="#6a6a6a" stroke-width=".7"/><path d="M168 114.95 H177.7" stroke="#6a6a6a" stroke-width=".8"/><text transform="translate(173.6 113.75) rotate(-90)" font-size="5.2" fill="#838383" font-family="Liberation Sans, sans-serif">-100</text><path d="M175 120.01 H177.7" stroke="#6a6a6a" stroke-width=".7"/><path d="M175 125.07 H177.7" stroke="#6a6a6a" stroke-width=".7"/><path d="M175 130.14 H177.7" stroke="#6a6a6a" stroke-width=".7"/><path d="M175 135.20 H177.7" stroke="#6a6a6a" stroke-width=".7"/><path d="M171.5 140.26 H177.7" stroke="#6a6a6a" stroke-width=".8"/><path d="M175 145.32 H177.7" stroke="#6a6a6a" stroke-width=".7"/><path d="M175 150.39 H177.7" stroke="#6a6a6a" stroke-width=".7"/><path d="M175 155.45 H177.7" stroke="#6a6a6a" stroke-width=".7"/><path d="M175 160.51 H177.7" stroke="#6a6a6a" stroke-width=".7"/><path d="M168 165.57 H177.7" stroke="#6a6a6a" stroke-width=".8"/><text transform="translate(173.6 164.38) rotate(-90)" font-size="5.2" fill="#838383" font-family="Liberation Sans, sans-serif">-50</text><path d="M175 170.64 H177.7" stroke="#6a6a6a" stroke-width=".7"/><path d="M175 175.70 H177.7" stroke="#6a6a6a" stroke-width=".7"/><path d="M175 180.76 H177.7" stroke="#6a6a6a" stroke-width=".7"/><path d="M175 185.82 H177.7" stroke="#6a6a6a" stroke-width=".7"/><path d="M171.5 190.89 H177.7" stroke="#6a6a6a" stroke-width=".8"/><path d="M175 195.95 H177.7" stroke="#6a6a6a" stroke-width=".7"/><path d="M175 201.01 H177.7" stroke="#6a6a6a" stroke-width=".7"/><path d="M175 206.07 H177.7" stroke="#6a6a6a" stroke-width=".7"/><path d="M175 211.14 H177.7" stroke="#6a6a6a" stroke-width=".7"/><path d="M168 216.20 H177.7" stroke="#6a6a6a" stroke-width=".8"/><text transform="translate(173.6 215.00) rotate(-90)" font-size="5.2" fill="#838383" font-family="Liberation Sans, sans-serif">0</text><path d="M175 221.26 H177.7" stroke="#6a6a6a" stroke-width=".7"/><path d="M175 226.32 H177.7" stroke="#6a6a6a" stroke-width=".7"/><path d="M175 231.39 H177.7" stroke="#6a6a6a" stroke-width=".7"/><path d="M175 236.45 H177.7" stroke="#6a6a6a" stroke-width=".7"/><path d="M171.5 241.51 H177.7" stroke="#6a6a6a" stroke-width=".8"/><path d="M175 246.57 H177.7" stroke="#6a6a6a" stroke-width=".7"/><path d="M175 251.64 H177.7" stroke="#6a6a6a" stroke-width=".7"/><path d="M175 256.70 H177.7" stroke="#6a6a6a" stroke-width=".7"/><path d="M175 261.76 H177.7" stroke="#6a6a6a" stroke-width=".7"/><path d="M168 266.82 H177.7" stroke="#6a6a6a" stroke-width=".8"/><text transform="translate(173.6 265.62) rotate(-90)" font-size="5.2" fill="#838383" font-family="Liberation Sans, sans-serif">50</text><path d="M175 271.89 H177.7" stroke="#6a6a6a" stroke-width=".7"/><path d="M175 276.95 H177.7" stroke="#6a6a6a" stroke-width=".7"/><path d="M175 282.01 H177.7" stroke="#6a6a6a" stroke-width=".7"/><path d="M175 287.07 H177.7" stroke="#6a6a6a" stroke-width=".7"/><path d="M171.5 292.14 H177.7" stroke="#6a6a6a" stroke-width=".8"/><path d="M175 297.20 H177.7" stroke="#6a6a6a" stroke-width=".7"/><path d="M175 302.26 H177.7" stroke="#6a6a6a" stroke-width=".7"/><path d="M175 307.32 H177.7" stroke="#6a6a6a" stroke-width=".7"/><path d="M175 312.39 H177.7" stroke="#6a6a6a" stroke-width=".7"/><path d="M168 317.45 H177.7" stroke="#6a6a6a" stroke-width=".8"/><text transform="translate(173.6 316.25) rotate(-90)" font-size="5.2" fill="#838383" font-family="Liberation Sans, sans-serif">100</text><path d="M175 322.51 H177.7" stroke="#6a6a6a" stroke-width=".7"/><path d="M175 327.57 H177.7" stroke="#6a6a6a" stroke-width=".7"/><path d="M175 332.64 H177.7" stroke="#6a6a6a" stroke-width=".7"/><path d="M175 337.70 H177.7" stroke="#6a6a6a" stroke-width=".7"/><path d="M171.5 342.76 H177.7" stroke="#6a6a6a" stroke-width=".8"/><path d="M175 347.82 H177.7" stroke="#6a6a6a" stroke-width=".7"/><path d="M175 352.89 H177.7" stroke="#6a6a6a" stroke-width=".7"/><path d="M175 357.95 H177.7" stroke="#6a6a6a" stroke-width=".7"/><path d="M175 363.01 H177.7" stroke="#6a6a6a" stroke-width=".7"/><path d="M168 368.07 H177.7" stroke="#6a6a6a" stroke-width=".8"/><text transform="translate(173.6 366.88) rotate(-90)" font-size="5.2" fill="#838383" font-family="Liberation Sans, sans-serif">150</text><path d="M175 373.14 H177.7" stroke="#6a6a6a" stroke-width=".7"/><path d="M175 378.20 H177.7" stroke="#6a6a6a" stroke-width=".7"/><path d="M175 383.26 H177.7" stroke="#6a6a6a" stroke-width=".7"/><path d="M175 388.32 H177.7" stroke="#6a6a6a" stroke-width=".7"/><path d="M171.5 393.39 H177.7" stroke="#6a6a6a" stroke-width=".8"/><path d="M175 398.45 H177.7" stroke="#6a6a6a" stroke-width=".7"/><path d="M175 403.51 H177.7" stroke="#6a6a6a" stroke-width=".7"/><path d="M175 408.57 H177.7" stroke="#6a6a6a" stroke-width=".7"/><path d="M175 413.64 H177.7" stroke="#6a6a6a" stroke-width=".7"/><path d="M168 418.70 H177.7" stroke="#6a6a6a" stroke-width=".8"/><text transform="translate(173.6 417.50) rotate(-90)" font-size="5.2" fill="#838383" font-family="Liberation Sans, sans-serif">200</text><path d="M175 423.76 H177.7" stroke="#6a6a6a" stroke-width=".7"/><path d="M175 428.82 H177.7" stroke="#6a6a6a" stroke-width=".7"/><path d="M175 433.89 H177.7" stroke="#6a6a6a" stroke-width=".7"/><path d="M175 438.95 H177.7" stroke="#6a6a6a" stroke-width=".7"/><path d="M171.5 444.01 H177.7" stroke="#6a6a6a" stroke-width=".8"/><path d="M175 449.07 H177.7" stroke="#6a6a6a" stroke-width=".7"/><path d="M175 454.14 H177.7" stroke="#6a6a6a" stroke-width=".7"/><path d="M175 459.20 H177.7" stroke="#6a6a6a" stroke-width=".7"/><path d="M175 464.26 H177.7" stroke="#6a6a6a" stroke-width=".7"/></svg>
<div class="abs" style="left:168.2px;top:64.4px;width:9.4px;height:8.5px;background:#898989;"></div>
<div id="viewport" class="abs" style="left:177.6px;top:72.9px;width:534px;height:394.9px;background:#a5d439;overflow:hidden;">
<svg style="left:0;top:0;" width="534" height="394.9" viewBox="177.6 72.9 534 394.9"><defs>
<pattern id="hatch" width="2.6" height="2.6" patternUnits="userSpaceOnUse" patternTransform="rotate(-45)"><rect width="3" height="3" fill="#a6645a"/><rect width="3" height="1.2" fill="#b4766a"/></pattern>
<g id="lp"><ellipse cx="0" cy="0" rx="1" ry="1.7" fill="#c6f062" transform="rotate(-28)"/><ellipse cx="4.3" cy="-1.1" rx="1" ry="1.7" fill="#c6f062" transform="rotate(28 4.3 -1.1)"/></g>
<g id="dp"><ellipse cx="0" cy="0" rx=".95" ry="1.25" fill="#94c730"/><ellipse cx="4.1" cy="0" rx=".95" ry="1.25" fill="#94c730"/></g>
<g id="tA"><use href="#dp" x="3.1" y="4"/><use href="#lp" x="8.5" y="12.6"/><circle cx="2.6" cy="9.6" r=".7" fill="#b9e552"/></g>
<g id="tB"><use href="#lp" x="4" y="5.4"/><use href="#dp" x="10.6" y="12"/><circle cx="3" cy="10" r=".6" fill="#b9e552"/></g>
<g id="tC"><use href="#dp" x="2.6" y="4"/><ellipse cx="10.4" cy="4" rx=".95" ry="1.25" fill="#94c730"/><use href="#lp" x="8.5" y="12.6"/><circle cx="13.6" cy="5.4" r=".7" fill="#b9e552"/></g>
<g id="tD"><use href="#dp" x="7.6" y="5"/><use href="#lp" x="3.4" y="12.4"/><circle cx="9.6" cy="11" r=".6" fill="#b9e552"/></g>
<g id="bush"><ellipse cx="0" cy="5.5" rx="7.5" ry="3" fill="#86c43a"/><circle cx="-3.6" cy="1" r="4.8" fill="#2f8f80"/><circle cx="3.8" cy="1.4" r="4.6" fill="#2f8f80"/><circle cx="0" cy="-2.6" r="5" fill="#3aa88c"/><circle cx="0" cy="2.6" r="4.8" fill="#3aa88c"/><circle cx="-2.6" cy="-1.2" r="3" fill="#5cc58a"/><circle cx="2.8" cy="-.4" r="2.8" fill="#5cc58a"/><circle cx="-.4" cy="-3.4" r="2" fill="#86dd8f"/><circle cx="0" cy="1.6" r="1.6" fill="#9fd8c8"/></g>
<g id="tree"><ellipse cx="0" cy="14.8" rx="11.5" ry="4" fill="#7cc040"/><ellipse cx="0" cy="14" rx="9.6" ry="3.2" fill="#48b08a"/><path d="M-2.6 4 L-3.4 14.5 L-5 16.3 H5 L3.4 14.5 L2.6 4 Z" fill="#4d9ea0"/><path d="M-3.2 14 L-4.6 16.2 H4.6 L3.2 14 Z" fill="#9aa3a3"/><circle cx="0" cy="17" r="1.6" fill="#d2493a"/>
<circle cx="-9.5" cy="1" r="6.2" fill="#2f8f80"/><circle cx="9.5" cy="1.4" r="6.2" fill="#2f8f80"/><circle cx="-4.6" cy="6" r="5.6" fill="#2f8f80"/><circle cx="5" cy="6" r="5.6" fill="#2f8f80"/><circle cx="0" cy="-5" r="8.6" fill="#3aa88c"/><circle cx="-6.5" cy="-3" r="6.4" fill="#3aa88c"/><circle cx="6.5" cy="-3" r="6.4" fill="#3aa88c"/><circle cx="0" cy="2.6" r="6.6" fill="#3aa88c"/>
<circle cx="-5" cy="-5" r="3.6" fill="#5cc58a"/><circle cx="4.6" cy="-5.6" r="3.8" fill="#5cc58a"/><circle cx="-9.6" cy="0" r="2.8" fill="#5cc58a"/><circle cx="9.4" cy="-.4" r="2.8" fill="#5cc58a"/><circle cx="0" cy="-9.4" r="3" fill="#7fdb8d"/><circle cx="-1" cy="-1" r="2.6" fill="#7fdb8d"/><circle cx="5.6" cy="3.4" r="2.2" fill="#5cc58a"/><circle cx="-5.4" cy="4" r="2.2" fill="#5cc58a"/></g>
<g id="rock"><ellipse cx="0" cy="1.6" rx="4" ry="2" fill="#8fb63e"/><circle cx="0" cy="0" r="3.2" fill="#b9bcc4"/><circle cx="-.6" cy="-.8" r="1.8" fill="#e6e8ee"/></g>
</defs><use href="#tD" x="181.3" y="232.4"/><use href="#tD" x="181.3" y="248.6"/><use href="#tB" x="181.3" y="297.2"/><use href="#tD" x="181.3" y="329.6"/><use href="#tD" x="181.3" y="345.8"/><use href="#tD" x="181.3" y="362.0"/><use href="#tD" x="181.3" y="426.8"/><use href="#tD" x="197.5" y="167.6"/><use href="#tA" x="197.5" y="264.8"/><use href="#tC" x="197.5" y="345.8"/><use href="#tA" x="197.5" y="378.2"/><use href="#tB" x="197.5" y="459.2"/><use href="#tA" x="213.7" y="216.2"/><use href="#tB" x="213.7" y="232.4"/><use href="#tA" x="213.7" y="313.4"/><use href="#tA" x="213.7" y="378.2"/><use href="#tB" x="213.7" y="459.2"/><use href="#tB" x="229.9" y="135.2"/><use href="#tB" x="229.9" y="167.6"/><use href="#tD" x="229.9" y="183.8"/><use href="#tA" x="229.9" y="329.6"/><use href="#tA" x="229.9" y="362.0"/><use href="#tC" x="229.9" y="443.0"/><use href="#tB" x="246.1" y="102.8"/><use href="#tB" x="246.1" y="200.0"/><use href="#tD" x="246.1" y="232.4"/><use href="#tD" x="246.1" y="248.6"/><use href="#tC" x="246.1" y="264.8"/><use href="#tA" x="246.1" y="313.4"/><use href="#tA" x="246.1" y="410.6"/><use href="#tA" x="246.1" y="443.0"/><use href="#tD" x="262.3" y="86.6"/><use href="#tA" x="262.3" y="102.8"/><use href="#tD" x="262.3" y="119.0"/><use href="#tB" x="262.3" y="232.4"/><use href="#tB" x="262.3" y="281.0"/><use href="#tA" x="262.3" y="362.0"/><use href="#tA" x="262.3" y="378.2"/><use href="#tD" x="262.3" y="410.6"/><use href="#tB" x="278.5" y="102.8"/><use href="#tC" x="278.5" y="119.0"/><use href="#tC" x="278.5" y="151.4"/><use href="#tA" x="278.5" y="248.6"/><use href="#tD" x="278.5" y="329.6"/><use href="#tD" x="278.5" y="362.0"/><use href="#tB" x="294.7" y="151.4"/><use href="#tA" x="294.7" y="216.2"/><use href="#tB" x="294.7" y="248.6"/><use href="#tD" x="294.7" y="362.0"/><use href="#tD" x="294.7" y="443.0"/><use href="#tC" x="310.9" y="102.8"/><use href="#tA" x="310.9" y="119.0"/><use href="#tA" x="310.9" y="151.4"/><use href="#tB" x="310.9" y="232.4"/><use href="#tA" x="310.9" y="378.2"/><use href="#tB" x="327.1" y="86.6"/><use href="#tA" x="327.1" y="119.0"/><use href="#tA" x="327.1" y="167.6"/><use href="#tA" x="327.1" y="248.6"/><use href="#tA" x="327.1" y="362.0"/><use href="#tA" x="327.1" y="378.2"/><use href="#tB" x="343.3" y="86.6"/><use href="#tB" x="343.3" y="102.8"/><use href="#tB" x="343.3" y="248.6"/><use href="#tD" x="343.3" y="394.4"/><use href="#tA" x="359.5" y="70.4"/><use href="#tB" x="359.5" y="102.8"/><use href="#tD" x="359.5" y="167.6"/><use href="#tB" x="359.5" y="232.4"/><use href="#tB" x="359.5" y="378.2"/><use href="#tD" x="359.5" y="410.6"/><use href="#tA" x="375.7" y="119.0"/><use href="#tD" x="375.7" y="248.6"/><use href="#tA" x="391.9" y="70.4"/><use href="#tB" x="391.9" y="167.6"/><use href="#tB" x="391.9" y="200.0"/><use href="#tC" x="391.9" y="216.2"/><use href="#tA" x="391.9" y="248.6"/><use href="#tA" x="391.9" y="426.8"/><use href="#tD" x="408.1" y="119.0"/><use href="#tB" x="408.1" y="167.6"/><use href="#tA" x="408.1" y="183.8"/><use href="#tB" x="408.1" y="248.6"/><use href="#tC" x="408.1" y="362.0"/><use href="#tA" x="408.1" y="394.4"/><use href="#tA" x="408.1" y="410.6"/><use href="#tC" x="408.1" y="426.8"/><use href="#tC" x="424.3" y="119.0"/><use href="#tD" x="424.3" y="135.2"/><use href="#tA" x="424.3" y="151.4"/><use href="#tB" x="424.3" y="200.0"/><use href="#tB" x="424.3" y="216.2"/><use href="#tC" x="424.3" y="248.6"/><use href="#tB" x="424.3" y="378.2"/><use href="#tB" x="440.5" y="102.8"/><use href="#tA" x="440.5" y="119.0"/><use href="#tB" x="440.5" y="183.8"/><use href="#tA" x="440.5" y="378.2"/><use href="#tC" x="440.5" y="394.4"/><use href="#tA" x="456.7" y="70.4"/><use href="#tC" x="456.7" y="86.6"/><use href="#tA" x="456.7" y="102.8"/><use href="#tB" x="456.7" y="151.4"/><use href="#tB" x="456.7" y="183.8"/><use href="#tB" x="456.7" y="200.0"/><use href="#tB" x="456.7" y="216.2"/><use href="#tA" x="456.7" y="362.0"/><use href="#tA" x="456.7" y="394.4"/><use href="#tA" x="472.9" y="151.4"/><use href="#tB" x="472.9" y="183.8"/><use href="#tB" x="472.9" y="216.2"/><use href="#tB" x="472.9" y="232.4"/><use href="#tC" x="489.1" y="119.0"/><use href="#tA" x="489.1" y="200.0"/><use href="#tA" x="489.1" y="216.2"/><use href="#tB" x="505.3" y="86.6"/><use href="#tB" x="505.3" y="200.0"/><use href="#tD" x="505.3" y="362.0"/><use href="#tD" x="505.3" y="426.8"/><use href="#tD" x="505.3" y="443.0"/><use href="#tB" x="521.5" y="86.6"/><use href="#tD" x="521.5" y="102.8"/><use href="#tA" x="521.5" y="135.2"/><use href="#tA" x="521.5" y="167.6"/><use href="#tA" x="521.5" y="248.6"/><use href="#tD" x="521.5" y="378.2"/><use href="#tD" x="521.5" y="394.4"/><use href="#tD" x="521.5" y="410.6"/><use href="#tD" x="521.5" y="426.8"/><use href="#tB" x="521.5" y="459.2"/><use href="#tA" x="537.7" y="86.6"/><use href="#tA" x="537.7" y="183.8"/><use href="#tB" x="537.7" y="216.2"/><use href="#tB" x="537.7" y="248.6"/><use href="#tD" x="537.7" y="410.6"/><use href="#tD" x="537.7" y="426.8"/><use href="#tB" x="553.9" y="70.4"/><use href="#tB" x="553.9" y="167.6"/><use href="#tB" x="553.9" y="232.4"/><use href="#tA" x="553.9" y="394.4"/><use href="#tA" x="553.9" y="410.6"/><use href="#tC" x="570.1" y="135.2"/><use href="#tA" x="570.1" y="183.8"/><use href="#tC" x="570.1" y="200.0"/><use href="#tA" x="570.1" y="248.6"/><use href="#tA" x="586.3" y="70.4"/><use href="#tA" x="586.3" y="102.8"/><use href="#tA" x="586.3" y="362.0"/><use href="#tD" x="586.3" y="410.6"/><use href="#tA" x="586.3" y="426.8"/><use href="#tC" x="602.5" y="102.8"/><use href="#tC" x="602.5" y="167.6"/><use href="#tA" x="602.5" y="216.2"/><use href="#tB" x="602.5" y="248.6"/><use href="#tC" x="602.5" y="362.0"/><use href="#tC" x="602.5" y="426.8"/><use href="#tA" x="618.7" y="70.4"/><use href="#tA" x="618.7" y="86.6"/><use href="#tA" x="618.7" y="102.8"/><use href="#tB" x="618.7" y="151.4"/><use href="#tB" x="618.7" y="232.4"/><use href="#tA" x="618.7" y="362.0"/><use href="#tA" x="618.7" y="426.8"/><use href="#tB" x="634.9" y="102.8"/><use href="#tB" x="634.9" y="151.4"/><use href="#tB" x="634.9" y="232.4"/><use href="#tC" x="634.9" y="394.4"/><use href="#tA" x="634.9" y="443.0"/><use href="#tA" x="651.1" y="70.4"/><use href="#tB" x="651.1" y="183.8"/><use href="#tB" x="651.1" y="200.0"/><use href="#tB" x="651.1" y="216.2"/><use href="#tA" x="651.1" y="313.4"/><use href="#tA" x="651.1" y="329.6"/><use href="#tC" x="651.1" y="345.8"/><use href="#tA" x="651.1" y="362.0"/><use href="#tA" x="651.1" y="394.4"/><use href="#tB" x="667.3" y="86.6"/><use href="#tB" x="667.3" y="102.8"/><use href="#tB" x="667.3" y="183.8"/><use href="#tA" x="667.3" y="216.2"/><use href="#tB" x="667.3" y="232.4"/><use href="#tA" x="667.3" y="345.8"/><use href="#tC" x="667.3" y="426.8"/><use href="#tD" x="667.3" y="443.0"/><use href="#tA" x="683.5" y="70.4"/><use href="#tA" x="683.5" y="102.8"/><use href="#tC" x="683.5" y="119.0"/><use href="#tB" x="683.5" y="200.0"/><use href="#tB" x="683.5" y="248.6"/><use href="#tB" x="683.5" y="264.8"/><use href="#tA" x="683.5" y="345.8"/><use href="#tC" x="683.5" y="378.2"/><use href="#tB" x="699.7" y="297.2"/><use href="#tD" x="699.7" y="362.0"/><use href="#tB" x="699.7" y="410.6"/><path d="M186.6 72 H197 V118 H177 V107.6 Q186.6 107 186.6 100 Z" fill="#bd7640"/><path d="M186.6 72 V100 Q186.6 107 177 107.6" fill="none" stroke="#a05e30" stroke-width="1.2"/><path d="M196.8 72 V117.8 H177" fill="none" stroke="#a8622f" stroke-width="1.3"/><path d="M190 76 h2 M192.5 84 h2 M189.5 93 h2 M193 101 h2 M183 111 h2 M190 113 h2 M179 109.5 h2" stroke="#cf8a52" stroke-width="1.2"/><circle cx="181" cy="86" r="1.3" fill="#c2ea60"/><circle cx="183.5" cy="97" r="1.2" fill="#c2ea60"/><circle cx="180" cy="101" r="1.1" fill="#bfe65c"/><circle cx="184" cy="78" r="1" fill="#bfe65c"/><use href="#tree" x="232.5" y="86"/><use href="#tree" x="258" y="144.5"/><use href="#bush" x="214.5" y="107.5"/><use href="#bush" x="203.6" y="145"/><g transform="translate(182.5 127) scale(.62)"><use href="#bush"/></g><g transform="translate(178.3 136) scale(.7)"><use href="#bush"/></g><use href="#rock" x="198.5" y="123.4"/><g transform="translate(179.6 166) scale(.8)"><use href="#rock"/></g><path d="M295.20 314.40 L378.30 314.40 L378.30 298.60 L394.00 298.60 L394.00 281.70 L506.80 281.70 L506.80 265.30 L554.60 265.30 L554.60 281.70 L651.40 281.70 L651.40 362.30 L295.20 362.30 Z" fill="url(#hatch)"/><rect x="298.2" y="317.2" width="83.1" height="3.4" fill="#c88b78"/><rect x="298.2" y="320.5" width="83.1" height=".8" fill="#8c4c44"/><rect x="381.3" y="301.40000000000003" width="15.7" height="3.4" fill="#c88b78"/><rect x="381.3" y="304.70000000000005" width="15.7" height=".8" fill="#8c4c44"/><rect x="397" y="284.5" width="112.8" height="3.4" fill="#c88b78"/><rect x="397" y="287.8" width="112.8" height=".8" fill="#8c4c44"/><rect x="509.8" y="268.1" width="41.8" height="3.4" fill="#c88b78"/><rect x="509.8" y="271.40000000000003" width="41.8" height=".8" fill="#8c4c44"/><rect x="551.6" y="284.5" width="96.8" height="3.4" fill="#c88b78"/><rect x="551.6" y="287.8" width="96.8" height=".8" fill="#8c4c44"/><rect x="296" y="354.3" width="354.6" height="1.2" fill="#96524a"/><rect x="296" y="355.5" width="354.6" height="6" fill="#efe0d4"/><rect x="295.6" y="356.4" width="2.9" height="5.4" fill="#a86a5a"/><rect x="648.2" y="356.4" width="2.9" height="5.4" fill="#a86a5a"/><path d="M" fill="none" stroke="#8c4c44" stroke-width=".8" opacity=".9"/><path d="M296.95 356.40 L296.95 316.15 L380.05 316.15 L380.05 300.35 L395.75 300.35 L395.75 283.45 L508.55 283.45 L508.55 267.05 L552.85 267.05 L552.85 283.45 L649.65 283.45 L649.65 356.40" fill="none" stroke="#f4d28e" stroke-width="2.5"/><path d="M295.20 314.40 L378.30 314.40 L378.30 298.60 L394.00 298.60 L394.00 281.70 L506.80 281.70 L506.80 265.30 L554.60 265.30 L554.60 281.70 L651.40 281.70 L651.40 362.30 L295.20 362.30 Z" fill="none" stroke="#84452f" stroke-width="1.1"/><g transform="translate(461.3 0)"><path d="M-3.6 312.4 C-6.6 307.5 -7.4 302.5 -6 298.8 C-3.4 301.5 -1.6 306 -1.4 312 Z" fill="#3fae3c"/><path d="M-4.8 305 C-5.6 303 -5.6 301 -5.2 300 C-3.8 302 -3 304 -2.6 306.5 Z" fill="#7fd84a"/><path d="M-2.6 311 C-2.6 305.5 -.2 300.6 4.4 298.6 C5.6 302.6 2.8 308 -.6 311.6 Z" fill="#f2d43a"/><path d="M-1.6 309.5 C-1.2 305.5 .6 302 3.2 300.4" fill="none" stroke="#fbf08a" stroke-width="1.1"/><path d="M-2 312.6 C-.4 308.8 3.4 305.6 7.6 304.8 C6.8 308.4 3 311.6 -.6 313 Z" fill="#4cb83e"/><path d="M5.2 311.4 l1.4 .6" stroke="#c0453a" stroke-width="1.5"/><ellipse cx="0" cy="319" rx="7.3" ry="2.5" fill="#d9873f"/><ellipse cx="0" cy="317.2" rx="4.6" ry="2.7" fill="#f4d38e"/><path d="M-4.4 318.5 Q0 319.6 4.4 318.5" stroke="#c4503a" stroke-width="1.1" fill="none"/><rect x="-5" y="320.6" width="10" height="6.2" rx="1.6" fill="#bfd7da"/><rect x="-4.6" y="326" width="9.2" height="5" rx="1" fill="#2f9a96"/><rect x="-5.4" y="325.4" width="1.8" height="3.4" fill="#e6c9a8"/><rect x="3.6" y="325.4" width="1.8" height="3.4" fill="#e6c9a8"/><rect x="-4.4" y="330.6" width="3.6" height="2" fill="#23666c"/><rect x=".8" y="330.6" width="3.6" height="2" fill="#23666c"/><rect x="-3" y="322.4" width="2.2" height="2.4" rx=".6" fill="#5f8a94"/><rect x=".8" y="322.4" width="2.2" height="2.4" rx=".6" fill="#5f8a94"/></g><rect x="443.6" y="306.6" width="5" height="3.4" rx="1.4" fill="#c4dbe6"/><rect x="476" y="306.6" width="5" height="3.4" rx="1.4" fill="#c4dbe6"/><rect x="444.6" y="308" width="3" height=".9" fill="#7f9fb0"/><rect x="477" y="308" width="3" height=".9" fill="#7f9fb0"/><path d="M177 216.3 H712" stroke="#e0864a" stroke-width="1" opacity=".85"/><path d="M262.2 216.3 V468" stroke="#e0864a" stroke-width="1" opacity=".85"/><circle cx="255.8" cy="209.8" r="2.4" fill="#8fe3ad" stroke="#b8e86a" stroke-width=".6"/><circle cx="259.2" cy="213.3" r="2.2" fill="#f27a8a"/><circle cx="259.2" cy="213.3" r=".8" fill="#d8283c"/><circle cx="262.6" cy="216.4" r="2.3" fill="#f6a6bd"/><circle cx="262.6" cy="216.4" r=".9" fill="#fbd4e0"/><path d="M269 206 L272.4 208.4 L269 210.8 L265.6 208.4 Z" fill="none" stroke="rgba(255,255,255,.4)" stroke-width=".8"/><text x="275" y="214.3" font-size="9.4" fill="rgba(255,255,255,.38)" font-family="Liberation Sans, sans-serif" textLength="41" lengthAdjust="spacingAndGlyphs">GrassLayer</text><circle cx="205.1" cy="83.3" r="4.2" fill="rgba(222,222,222,.82)" stroke="rgba(250,250,250,.85)" stroke-width=".7"/><path d="M202.79999999999998 83.3 H207.4" stroke="#8d9360" stroke-width="1.3"/><circle cx="257.1" cy="83.3" r="4.2" fill="rgba(222,222,222,.82)" stroke="rgba(250,250,250,.85)" stroke-width=".7"/><path d="M254.8 83.3 H259.40000000000003" stroke="#8d9360" stroke-width="1.3"/><path d="M257.1 81 V85.6" stroke="#8d9360" stroke-width="1.3"/><text x="217.6" y="86.4" font-size="8.6" fill="rgba(225,235,235,.55)" font-family="Liberation Sans, sans-serif" textLength="28" lengthAdjust="spacingAndGlyphs">277.2 %</text><path d="M183.6 80.5 L188.8 86.1 M188.8 80.5 L183.6 86.1 M186.2 79.3 V87.3 M182.2 83.3 H190.2" stroke="rgba(255,255,255,.8)" stroke-width=".9"/><rect x="341.8" y="462.9" width="132" height="1.8" rx=".9" fill="rgba(255,255,255,.32)"/><rect x="707.1" y="181.8" width="1.8" height="103.4" rx=".9" fill="rgba(255,255,255,.32)"/></svg>
</div>
<div class="abs" style="left:167.6px;top:470.4px;width:544.4px;height:22.6px;background:#454545;"></div>
<div class="abs" style="left:173.4px;top:479.8px;width:4.8px;height:4.8px;border-radius:50%;background:#f0d274;"></div>
<span class="t" style="left:180.5px;top:476px;font-size:9.2px;color:#dcdcdc;letter-spacing:-0.019px;">Output</span>
<span class="t" style="left:216.8px;top:476px;font-size:9.2px;color:#d0d0d0;letter-spacing:-0.363px;">Debugger</span>
<span class="t" style="left:263.8px;top:476px;font-size:9.2px;color:#d0d0d0;letter-spacing:-0.306px;">Audio</span>
<span class="t" style="left:294.8px;top:476px;font-size:9.2px;color:#d0d0d0;letter-spacing:-0.212px;">Animation</span>
<span class="t" style="left:343px;top:476px;font-size:9.2px;color:#d0d0d0;letter-spacing:-0.404px;">Shader Editor</span>
<svg style="left:659.0px;top:478.5px;color:#555;" width="8" height="8" viewBox="0 0 16 16"><path d="M2 6 L3.5 3.5 L6 5 H10 L12.5 3.5 L14 6 V11 a3 3 0 0 1 -3 3 H5 a3 3 0 0 1 -3 -3 Z" fill="currentColor"/></svg>
<span class="t" style="left:671.3px;top:476.5px;font-size:8.8px;color:#7e7e7e;letter-spacing:-0.188px;">4.5.beta3</span>
<!-- right dock -->
<div class="abs" style="left:715px;top:26px;width:163px;height:16px;background:#363636;"></div>
<div class="abs" style="left:761.5px;top:26px;width:33px;height:16px;background:#434343;border-top:1px solid #6a9fd3;box-sizing:border-box;"></div>
<span class="t" style="left:720.3px;top:27.799999999999997px;font-size:9.2px;color:#7c7c7c;letter-spacing:-0.204px;">Inspector</span>
<span class="t" style="left:767.7px;top:27.799999999999997px;font-size:9.2px;color:#e2e2e2;letter-spacing:-0.123px;">Node</span>
<span class="t" style="left:801px;top:27.799999999999997px;font-size:9.2px;color:#7c7c7c;letter-spacing:-0.161px;">History</span>
<svg style="left:868.5px;top:29.299999999999997px;color:#8a8a8a;" width="9" height="9" viewBox="0 0 16 16"><circle cx="8" cy="2.5" r="1.7" fill="currentColor"/><circle cx="8" cy="8" r="1.7" fill="currentColor"/><circle cx="8" cy="13.5" r="1.7" fill="currentColor"/></svg>
<div class="abs" style="left:715px;top:42px;width:163px;height:451px;background:#434343;"></div>
<svg style="left:719.5px;top:49.8px;color:#dedede;" width="9" height="9" viewBox="0 0 16 16"><circle cx="3.2" cy="12.8" r="1.9" fill="currentColor"/><path d="M1.5 7.3 A7.2 7.2 0 0 1 8.7 14.5 M1.5 2.6 A11.9 11.9 0 0 1 13.4 14.5" fill="none" stroke="currentColor" stroke-width="2.2"/></svg>
<span class="t" style="left:747.3px;top:48.3px;font-size:9.2px;color:#dcdcdc;letter-spacing:-0.482px;">Signals</span>
<div class="abs" style="left:797px;top:45.3px;width:79.5px;height:17.5px;background:#363c42;border-radius:2px;"></div>
<svg style="left:800.0px;top:49.0px;color:#6fb0ee;" width="10" height="10" viewBox="0 0 16 16"><rect x="1.5" y="1.5" width="13" height="13" rx="1.2" fill="none" stroke="currentColor" stroke-width="1.8"/><rect x="4.2" y="4.2" width="7.6" height="7.6" rx="1.8" fill="currentColor"/><circle cx="8" cy="8" r="1.7" fill="#363c42"/></svg>
<span class="t" style="left:828.5px;top:48.3px;font-size:9.2px;color:#6fa9dd;letter-spacing:-0.478px;">Groups</span>
<svg style="left:718.95px;top:69.25px;color:#e2e2e2;" width="9.5" height="9.5" viewBox="0 0 16 16"><path d="M8 1 V15 M1 8 H15" stroke="currentColor" stroke-width="2.7" fill="none"/></svg>
<div class="abs" style="left:734px;top:65.8px;width:142.5px;height:16.2px;background:#373737;border-radius:2px;"></div>
<span class="t" style="left:737.5px;top:68px;font-size:9.2px;color:#8f8f8f;letter-spacing:-0.382px;">Filter Groups</span>
<svg style="left:863.45px;top:69.75px;color:#dadada;" width="8.5" height="8.5" viewBox="0 0 16 16"><circle cx="6.3" cy="6.3" r="3.9" fill="none" stroke="currentColor" stroke-width="2.2"/><path d="M9.3 9.3 L14 14" stroke="currentColor" stroke-width="2.6" stroke-linecap="round"/></svg>
<div class="abs" style="left:716.5px;top:85.4px;width:160px;height:406px;background:#3a3a3a;border-radius:2px;"></div>
<div class="abs" style="left:717.5px;top:87.2px;width:156px;height:16.6px;background:#4a4a4a;border-radius:1px;"></div>
<svg style="left:717.8px;top:92.0px;color:#8f8f8f;" width="7" height="7" viewBox="0 0 16 16"><path d="M3.5 5.5 L8 10.5 L12.5 5.5" fill="none" stroke="currentColor" stroke-width="2.2" stroke-linecap="round" stroke-linejoin="round"/></svg>
<svg style="left:726.75px;top:90.55px;color:#e8e8e8;" width="9.5" height="9.5" viewBox="0 0 16 16"><path d="M1.5 6.5 H14.5 V14 H1.5 Z M1.5 3 L13.8 1.3 L14.2 3.8 L1.9 5.6 Z" fill="currentColor"/></svg>
<span class="t" style="left:739.7px;top:89.5px;font-size:9.2px;color:#d8d8d8;letter-spacing:-0.609px;">Scene Groups</span>
<div class="abs" style="left:720px;top:104px;width:1px;height:40.7px;background:#4c4c4c;"></div>
<div class="abs" style="left:720px;top:111.8px;width:9px;height:1px;background:#4c4c4c;"></div>
<svg style="left:731.5px;top:107.3px;" width="9" height="9" viewBox="0 0 16 16"><rect x="2" y="2" width="12" height="12" rx="1.6" fill="#555555"/></svg>
<span class="t" style="left:746.3px;top:105.8px;font-size:9.2px;color:#d2d2d2;letter-spacing:-0.429px;">Player</span>
<svg style="left:845.8px;top:107.3px;color:#a5a5a5;" width="9" height="9" viewBox="0 0 16 16"><path d="M4.6 7 V5.2 a3.4 3.4 0 0 1 6.8 0 V7" fill="none" stroke="currentColor" stroke-width="2"/><path d="M2.5 7 H13.5 V14.5 H2.5 Z M7.2 9.5 V12.2 H8.8 V9.5 Z" fill="currentColor" fill-rule="evenodd"/></svg>
<svg style="left:862.7px;top:107.3px;color:#e6e6e6;" width="9" height="9" viewBox="0 0 16 16"><rect x="1.5" y="1.5" width="9.5" height="9.5" rx="1.2" fill="none" stroke="currentColor" stroke-width="1.9"/><rect x="5" y="5" width="9.8" height="9.8" rx="1.2" fill="currentColor"/><path d="M9.9 7.2 V12.6 M7.2 9.9 H12.6" stroke="#3a3a3a" stroke-width="1.5"/></svg>
<div class="abs" style="left:720px;top:128.0px;width:9px;height:1px;background:#4c4c4c;"></div>
<svg style="left:731.5px;top:123.5px;" width="9" height="9" viewBox="0 0 16 16"><rect x="2" y="2" width="12" height="12" rx="1.6" fill="#757575"/><path d="M4.6 8.3 L7 10.8 L11.6 5.2" fill="none" stroke="#c4c4c4" stroke-width="2"/></svg>
<span class="t" style="left:746.3px;top:122.0px;font-size:9.2px;color:#6f6f6f;letter-spacing:-0.648px;">Resource UI</span>
<svg style="left:845.8px;top:123.5px;color:#a5a5a5;" width="9" height="9" viewBox="0 0 16 16"><path d="M4.6 7 V5.2 a3.4 3.4 0 0 1 6.8 0 V7" fill="none" stroke="currentColor" stroke-width="2"/><path d="M2.5 7 H13.5 V14.5 H2.5 Z M7.2 9.5 V12.2 H8.8 V9.5 Z" fill="currentColor" fill-rule="evenodd"/></svg>
<svg style="left:862.7px;top:123.5px;color:#e6e6e6;" width="9" height="9" viewBox="0 0 16 16"><rect x="1.5" y="1.5" width="9.5" height="9.5" rx="1.2" fill="none" stroke="currentColor" stroke-width="1.9"/><rect x="5" y="5" width="9.8" height="9.8" rx="1.2" fill="currentColor"/><path d="M9.9 7.2 V12.6 M7.2 9.9 H12.6" stroke="#3a3a3a" stroke-width="1.5"/></svg>
<div class="abs" style="left:720px;top:144.2px;width:9px;height:1px;background:#4c4c4c;"></div>
<svg style="left:731.5px;top:139.7px;" width="9" height="9" viewBox="0 0 16 16"><rect x="2" y="2" width="12" height="12" rx="1.6" fill="#555555"/></svg>
<span class="t" style="left:746.3px;top:138.2px;font-size:9.2px;color:#d2d2d2;letter-spacing:-0.735px;">Trees</span>
<svg style="left:845.8px;top:139.7px;color:#a5a5a5;" width="9" height="9" viewBox="0 0 16 16"><path d="M4.6 7 V5.2 a3.4 3.4 0 0 1 6.8 0 V7" fill="none" stroke="currentColor" stroke-width="2"/><path d="M2.5 7 H13.5 V14.5 H2.5 Z M7.2 9.5 V12.2 H8.8 V9.5 Z" fill="currentColor" fill-rule="evenodd"/></svg>
<svg style="left:862.7px;top:139.7px;color:#e6e6e6;" width="9" height="9" viewBox="0 0 16 16"><rect x="1.5" y="1.5" width="9.5" height="9.5" rx="1.2" fill="none" stroke="currentColor" stroke-width="1.9"/><rect x="5" y="5" width="9.8" height="9.8" rx="1.2" fill="currentColor"/><path d="M9.9 7.2 V12.6 M7.2 9.9 H12.6" stroke="#3a3a3a" stroke-width="1.5"/></svg>
<div class="abs" style="left:717.5px;top:152.3px;width:156px;height:16.6px;background:#4a4a4a;border-radius:1px;"></div>
<svg style="left:726.75px;top:155.75px;color:#e4e4e4;" width="9.5" height="9.5" viewBox="0 0 16 16"><circle cx="8" cy="8" r="7" fill="currentColor"/><path d="M3.5 7 h2.2 v2.2 h-2.2 Z M6.9 7 h2.2 v2.2 h-2.2 Z M10.3 7 h2.2 v2.2 h-2.2 Z" fill="#4a4a4a"/><path d="M4.5 11 H11.5" stroke="#4a4a4a" stroke-width="1.3"/></svg>
<span class="t" style="left:739.7px;top:154.6px;font-size:9.2px;color:#d8d8d8;letter-spacing:-0.370px;">Global Groups</span>
<!-- watermark -->
<div class="abs" style="left:735px;top:448.8px;width:138px;height:40.4px;background:#f1f1f1;border-radius:3.5px;"></div>
<span class="t" style="left:742.4px;top:448.2px;height:28px;line-height:28px;font-size:22.2px;color:#1c1c1c;transform:scaleX(1.24);transform-origin:0 0;">CGer.com</span>
<span class="t" style="left:757.2px;top:473.9px;height:15px;line-height:15px;font-size:10.9px;letter-spacing:.45px;color:#3c3c3c;font-family:'Liberation Sans','Noto Sans CJK SC',sans-serif;"><span style="letter-spacing:1.7px;">CG</span>资源<span style="letter-spacing:1.7px;margin-left:7.6px;">CG</span>网站</span>
</div>
</body>
</html>
